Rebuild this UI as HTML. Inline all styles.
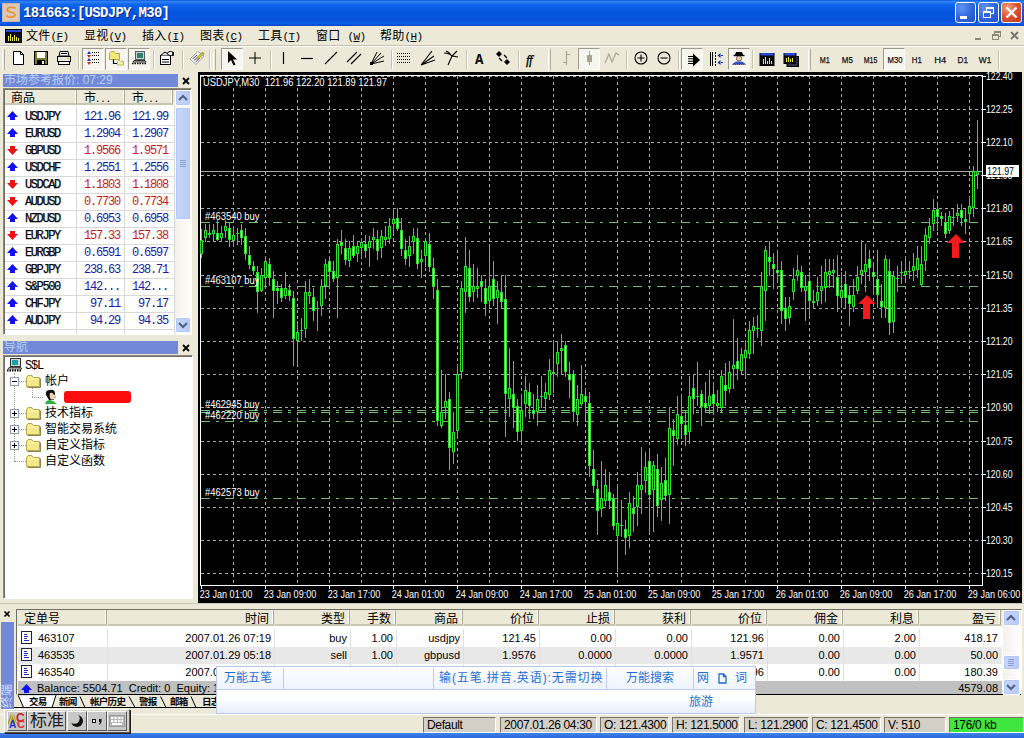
<!DOCTYPE html><html><head><meta charset="utf-8"><title>181663:[USDJPY,M30]</title><style>
*{box-sizing:border-box;margin:0;padding:0}
html,body{width:1024px;height:738px;overflow:hidden;background:#ece9d8}
body{position:relative;font-family:"Liberation Sans","Noto Sans CJK SC",sans-serif;font-size:11px;color:#000}
.a{position:absolute}
.t{position:absolute;white-space:nowrap;line-height:1}
.cj{font-family:"Liberation Sans","Noto Sans CJK SC",sans-serif}
.mono{font-family:"Liberation Mono","Noto Sans CJK SC",monospace}
#title{left:0;top:0;width:1024px;height:26px;background:linear-gradient(#0a59e0 0,#2f83f3 6%,#0f64ec 18%,#0556e0 45%,#0553dc 78%,#0a5ee8 90%,#0345c6 100%)}
#title .cap{left:23px;top:5px;font:bold 14px "Liberation Mono","Noto Sans CJK SC",monospace;color:#fff;letter-spacing:-0.7px;text-shadow:1px 1px 0 #0a2a80}
.tb{position:absolute;top:2px;width:21px;height:21px;border-radius:3px;border:1px solid #fff;background:radial-gradient(circle at 30% 25%,#5e96f5 0,#2e64dc 55%,#2050c8 100%)}
.tb.x{background:radial-gradient(circle at 30% 25%,#f0a080 0,#dc5030 50%,#c03a1a 100%)}
#menu{left:0;top:26px;width:1024px;height:20px;background:#ece9d8}
#menu .t{top:4px;font-size:12px;letter-spacing:0.2px}
.sepH{position:absolute;left:0;width:1024px;height:2px;border-top:1px solid #c5c2b2;border-bottom:1px solid #fff}
.vs{position:absolute;top:50px;width:2px;height:19px;border-left:1px solid #c5c2b2;border-right:1px solid #fff}
.grip{position:absolute;top:49px;width:3px;height:21px;border-left:1px solid #fff;border-right:1px solid #b0ad9c;background:#ece9d8}
.pr{position:absolute;top:48px;width:22px;height:22px;border:1px solid;border-color:#9d9a8b #fff #fff #9d9a8b;background:#f6f5ee}
.ic{position:absolute;top:51px;width:16px;height:16px}
.ph{position:absolute;left:3px;width:175px;height:13px;background:#7189d8;color:#b9d0f3;font-size:12px;overflow:hidden}
.px{position:absolute;font:bold 11px "Liberation Sans",sans-serif;}
</style></head><body><div id="title" class="a"><div class="a" style="left:2px;top:3px;width:18px;height:19px;background:#dcc8b8;border:1px solid #c8b4a4"><svg width="16" height="17" viewBox="0 0 16 17"><path d="M12.5 4.5 C10 2.5 4 3 4.2 6 C4.4 8.6 12 7.6 12 10.6 C12 13.6 5.5 13.8 3.2 11.6" fill="none" stroke="#e8943a" stroke-width="1.8"/></svg></div><div class="t cap">181663:[USDJPY,M30]</div><div class="tb" style="left:955px"><div class="a" style="left:4px;top:13px;width:7px;height:3px;background:#fff"></div></div><div class="tb" style="left:978px"><div class="a" style="left:7px;top:4px;width:8px;height:7px;border:1px solid #fff;border-top-width:2px"></div><div class="a" style="left:4px;top:8px;width:8px;height:7px;border:1px solid #fff;border-top-width:2px;background:#2e64dc"></div></div><div class="tb x" style="left:1001px"><svg class="a" style="left:0;top:0" width="19" height="19"><path d="M4.500 4.500 L14.500 14.500 M14.500 4.500 L4.500 14.500" stroke="#fff" stroke-width="2.300"/></svg></div></div><div id="menu" class="a"><svg class="a" style="left:5px;top:3px" width="17" height="14"><rect x=".5" y=".5" width="16" height="13" fill="#0a0a20" stroke="#000"/><rect x="1" y="1" width="15" height="2" fill="#2848d8"/><path d="M3.500 11.500V7M5.500 11.500V5M7.500 11.500V8M9.500 11.500V6M11.500 11.500V8M13.500 11.500V9" stroke="#f0e840" shape-rendering="crispEdges"/></svg><div class="t" style="left:26px">文件<span class="mono" style="font-size:11px;letter-spacing:-0.6px;margin-left:0px">(<u>F</u>)</span></div><div class="t" style="left:84px">显视<span class="mono" style="font-size:11px;letter-spacing:-0.6px;margin-left:0px">(<u>V</u>)</span></div><div class="t" style="left:142px">插入<span class="mono" style="font-size:11px;letter-spacing:-0.6px;margin-left:0px">(<u>I</u>)</span></div><div class="t" style="left:200px">图表<span class="mono" style="font-size:11px;letter-spacing:-0.6px;margin-left:0px">(<u>C</u>)</span></div><div class="t" style="left:258px">工具<span class="mono" style="font-size:11px;letter-spacing:-0.6px;margin-left:0px">(<u>T</u>)</span></div><div class="t" style="left:316px">窗口<span class="mono" style="font-size:11px;letter-spacing:-0.6px;margin-left:7px">(<u>W</u>)</span></div><div class="t" style="left:380px">帮助<span class="mono" style="font-size:11px;letter-spacing:-0.6px;margin-left:0px">(<u>H</u>)</span></div><div class="a" style="left:972px;top:2px;width:14px;height:15px"><div class="a" style="left:3px;top:10px;width:6px;height:2px;background:#8a8878"></div></div><div class="a" style="left:989px;top:2px;width:15px;height:15px"><div class="a" style="left:5px;top:3px;width:7px;height:6px;border:1px solid #8a8878;border-top-width:2px"></div><div class="a" style="left:3px;top:6px;width:7px;height:6px;border:1px solid #8a8878;border-top-width:2px;background:#ece9d8"></div></div><div class="a" style="left:1007px;top:2px;width:15px;height:15px"><svg width="15" height="15"><path d="M4 4 L11 11 M11 4 L4 11" stroke="#77756a" stroke-width="2"/></svg></div></div><div class="sepH" style="top:45px"></div><div class="grip" style="left:2px"></div><div class="pr" style="left:82px;width:22px"></div><div class="pr" style="left:105px;width:22px"></div><div class="pr" style="left:128px;width:22px"></div><div class="pr" style="left:221px;width:22px"></div><div class="pr" style="left:681px;width:22px"></div><div class="pr" style="left:728px;width:22px"></div><div class="pr" style="left:883px;width:22px"></div><div class="pr" style="left:578px;width:22px"></div><div class="vs" style="left:78px"></div><div class="vs" style="left:153px"></div><div class="vs" style="left:182px"></div><div class="vs" style="left:209px"></div><div class="vs" style="left:270px"></div><div class="vs" style="left:391px"></div><div class="vs" style="left:466px"></div><div class="vs" style="left:518px"></div><div class="vs" style="left:626px"></div><div class="vs" style="left:678px"></div><div class="vs" style="left:752px"></div><div class="grip" style="left:213px"></div><div class="grip" style="left:548px"></div><div class="grip" style="left:808px"></div><div class="vs" style="left:998px"></div><svg class="ic" style="left:10px;top:50px" width="16" height="16" viewBox="0 0 16 16"><path d="M3.5 1.5H10.5L13.5 4.5V14.5H3.5Z" fill="#fff" stroke="#000"/><path d="M10.5 1.5V4.5H13.5" fill="none" stroke="#000"/></svg><svg class="ic" style="left:33px;top:50px" width="16" height="16" viewBox="0 0 16 16"><rect x="1.5" y="1.5" width="13" height="13" fill="#7a7a30" stroke="#000"/><rect x="4" y="2" width="8" height="6" fill="#fff"/><rect x="4" y="10" width="8" height="5" fill="#000"/><rect x="9" y="11" width="2" height="3" fill="#fff"/></svg><svg class="ic" style="left:56px;top:50px" width="16" height="16" viewBox="0 0 16 16"><path d="M4 1.5H12L13 6H3Z" fill="#fff" stroke="#000"/><rect x="1.5" y="6.5" width="13" height="5" fill="#e8e8d8" stroke="#000"/><rect x="2.5" y="11.5" width="11" height="3" fill="#fff" stroke="#000"/><path d="M5 3.5H11" stroke="#000"/><rect x="11" y="8" width="2" height="1" fill="#cc0"/></svg><svg class="ic" style="left:85px;top:50px" width="16" height="16" viewBox="0 0 16 16"><path d="M2 4 L4 1 L6 4 Z" fill="#2030d0"/><path d="M7 2.5 H15" stroke="#000" stroke-dasharray="1 1"/><path d="M2 5 L6 5 L4 8 Z" fill="#c03020"/><path d="M7 5.5 H15" stroke="#000" stroke-dasharray="1 1"/><path d="M2 11 L4 8 L6 11 Z" fill="#2030d0"/><path d="M7 9.5 H15" stroke="#000" stroke-dasharray="1 1"/><path d="M2 12 L6 12 L4 15 Z" fill="#c03020"/><path d="M7 12.5 H15" stroke="#000" stroke-dasharray="1 1"/></svg><svg class="ic" style="left:108px;top:50px" width="16" height="16" viewBox="0 0 16 16"><path d="M1.5 3.5L3 1.5H6L7.5 3.5H11.5V9.5H1.5Z" fill="#f0e878" stroke="#b8a840"/><path d="M5.5 9.5V13.5H9" fill="none" stroke="#000" stroke-width="1.2"/><path d="M9.5 11.5L10.5 10.5H12L13 11.5H15.5V15H9.5Z" fill="#f5f0b0" stroke="#b8a840" stroke-width=".8"/></svg><svg class="ic" style="left:131px;top:50px" width="16" height="16" viewBox="0 0 16 16"><rect x="4.5" y="1.5" width="9" height="8" fill="#c8d8d0" stroke="#506060"/><rect x="6" y="3" width="6" height="5" fill="#308070"/><path d="M3 10.5H14L15 12H2Z" fill="#d8d8d0" stroke="#000" stroke-width=".8"/><path d="M1 13.5H15" stroke="#000" stroke-width="1.6" stroke-dasharray="1.5 1"/></svg><svg class="ic" style="left:159px;top:50px" width="16" height="16" viewBox="0 0 16 16"><rect x="1.5" y="5.5" width="10" height="9" fill="#fff" stroke="#000"/><path d="M1.5 5.5L6 2L11 5.5" fill="#ddd" stroke="#000"/><path d="M3 9.5H10M3 12H10" stroke="#000" stroke-width="1.2"/><ellipse cx="11.5" cy="3.5" rx="3" ry="2" fill="#fff" stroke="#000"/><path d="M14 2V6" stroke="#000" stroke-width="1.5"/></svg><svg class="ic" style="left:189px;top:50px" width="16" height="16" viewBox="0 0 16 16"><path d="M1 9L9 1.5L15 6L7 14.5Z" fill="#fff" stroke="#888" stroke-width=".8"/><path d="M3.5 9L8 5M5 10.5L8 8M6.5 12L11 8" stroke="#446" stroke-width="1"/><path d="M7 8.5L13 2.5L15 3.5L9 9.5Z" fill="#d8d020" stroke="#885"/></svg><svg class="ic" style="left:224px;top:50px" width="16" height="16" viewBox="0 0 16 16"><path d="M4 1V13L7 10L9.5 15.5L11.5 14.5L9 9.5H13Z" fill="#000"/></svg><svg class="ic" style="left:247px;top:50px" width="16" height="16" viewBox="0 0 16 16"><path d="M8 2V14M2 8H14" stroke="#000" stroke-width="1"/></svg><svg class="ic" style="left:275px;top:50px" width="16" height="16" viewBox="0 0 16 16"><path d="M8.5 2V14" stroke="#000" stroke-width="1.2"/></svg><svg class="ic" style="left:299px;top:50px" width="16" height="16" viewBox="0 0 16 16"><path d="M2 8.5H14" stroke="#000" stroke-width="1.2"/></svg><svg class="ic" style="left:323px;top:50px" width="16" height="16" viewBox="0 0 16 16"><path d="M2 14L14 2" stroke="#000" stroke-width="1.1"/></svg><svg class="ic" style="left:346px;top:50px" width="16" height="16" viewBox="0 0 16 16"><path d="M1 12L11 2M5 14L15 4" stroke="#000" stroke-width="1.1"/></svg><svg class="ic" style="left:369px;top:50px" width="16" height="16" viewBox="0 0 16 16"><path d="M2 14L8 2M2 14L12 3M2 14L15 6M2 14L15 11" stroke="#000" stroke-width="1"/><rect x="1" y="12" width="3" height="3" fill="#000"/></svg><svg class="ic" style="left:396px;top:50px" width="16" height="16" viewBox="0 0 16 16"><path d="M1 3.5H15" stroke="#000" stroke-dasharray="1 1"/><path d="M1 6.5H15" stroke="#000" stroke-dasharray="1 1"/><path d="M1 9.5H15" stroke="#000" stroke-dasharray="1 1"/><path d="M1 12.5H15" stroke="#000" stroke-dasharray="1 1"/></svg><svg class="ic" style="left:420px;top:50px" width="16" height="16" viewBox="0 0 16 16"><path d="M1 15L12 1M1 15L14 6M1 15L15 10" stroke="#000" stroke-width="1.1"/></svg><svg class="ic" style="left:443px;top:50px" width="16" height="16" viewBox="0 0 16 16"><path d="M5 15L9 6L14 1M9 6L15 7M1 3Q6 3 9 6M3 1Q6 2 8 5" stroke="#000" stroke-width="1.1" fill="none"/></svg><div class="t" style="left:475px;top:52px;font:bold 14px 'Liberation Mono',monospace">A</div><svg class="ic" style="left:495px;top:50px" width="16" height="16" viewBox="0 0 16 16"><path d="M4 1L7 4L4 7L1 4Z" fill="#000"/><path d="M12 9L15 12L12 15L9 12Z" fill="#000"/><path d="M4 8L7 11M9 5L12 8" stroke="#000" stroke-width="1.4"/></svg><div class="t" style="left:526px;top:52px;font:italic 13px 'Liberation Serif',serif;letter-spacing:-0.5px;-webkit-text-stroke:0.3px #000">ff</div><svg class="ic" style="left:558px;top:50px" width="16" height="16" viewBox="0 0 16 16"><path d="M8.5 1V15M5 12.5H8.5M8.5 4.5H12" stroke="#a8a595" stroke-width="1.2"/></svg><svg class="ic" style="left:581px;top:50px" width="16" height="16" viewBox="0 0 16 16"><path d="M8.5 1V15" stroke="#a8a595"/><rect x="6" y="5" width="5" height="7" fill="#a8a595"/></svg><svg class="ic" style="left:604px;top:50px" width="16" height="16" viewBox="0 0 16 16"><path d="M1 13L5 4L8 12L12 3L15 5" stroke="#a8a595" stroke-width="1.2" fill="none"/></svg><svg class="ic" style="left:633px;top:50px" width="16" height="16" viewBox="0 0 16 16"><circle cx="8" cy="8" r="6" fill="none" stroke="#000" stroke-width="1.1"/><path d="M4.5 8H11.5M8 4.5V11.5" stroke="#000" stroke-width="1.1"/></svg><svg class="ic" style="left:656px;top:50px" width="16" height="16" viewBox="0 0 16 16"><circle cx="8" cy="8" r="6" fill="none" stroke="#000" stroke-width="1.1"/><path d="M4.5 8H11.5" stroke="#000" stroke-width="1.1"/></svg><svg class="ic" style="left:685px;top:52px" width="16" height="16" viewBox="0 0 16 16"><path d="M8 1.5L15 8L8 14.5Z" fill="#000"/><path d="M3 4.5H8M3 6.8H8M3 9.2H8M3 11.5H8" stroke="#000" stroke-width="1.1"/></svg><svg class="ic" style="left:708px;top:51px" width="16" height="16" viewBox="0 0 16 16"><path d="M2.500 1V15M4.500 1V15" stroke="#000"/><path d="M7.500 1V15" stroke="#000" stroke-dasharray="2 1"/><path d="M9.500 4.500L12.500 2V7Z M15 4H12V5H15Z" fill="#1030c0"/><path d="M9.500 11.500L12.500 9V14Z M15 11H12V12H15Z" fill="#1030c0"/></svg><svg class="ic" style="left:731px;top:50px" width="16" height="16" viewBox="0 0 16 16"><path d="M4 5H12L11 2H5Z" fill="#000"/><path d="M2.5 5.5H13.5" stroke="#000" stroke-width="1.4"/><circle cx="8" cy="8.5" r="2.6" fill="#f0c8a0" stroke="#333" stroke-width=".7"/><path d="M1 15Q3 11 8 11.5Q13 11 15 15Z" fill="#3050c0"/><path d="M1 14.5H15" stroke="#88a" stroke-dasharray="1 1"/></svg><svg class="ic" style="left:759px;top:51px" width="16" height="16" viewBox="0 0 16 16"><rect x="1" y="2.500" width="14" height="12" fill="#0a0a0a" stroke="#000"/><rect x="1.500" y="2" width="13" height="2.500" fill="#2848d8"/><path d="M4.500 12.500V8M6.500 12.500V6M8.500 12.500V9.500M10.500 12.500V7M12.500 12.500V9.500" stroke="#f0e840" stroke-width="1" shape-rendering="crispEdges"/></svg><svg class="ic" style="left:783px;top:51px" width="16" height="16" viewBox="0 0 16 16"><rect x="4" y="5.500" width="11.500" height="10" fill="#0a0a0a" stroke="#000"/><rect x="1" y="2.500" width="12" height="10" fill="#0a0a0a" stroke="#000"/><rect x="1.500" y="2" width="11" height="2.500" fill="#2848d8"/><path d="M3.500 10.500V7M5.500 10.500V6M7.500 10.500V8M9.500 10.500V6.500" stroke="#f0e840" stroke-width="1" shape-rendering="crispEdges"/><path d="M14 6V14H5" stroke="#556" fill="none"/></svg><svg class="a" style="left:810px;top:48px" width="190" height="22" font-family="Liberation Sans, sans-serif" font-size="9.5" stroke="#111" stroke-width="0.25"><text x="9.8" y="14.5" textLength="10.0" lengthAdjust="spacingAndGlyphs" fill="#111">M1</text><text x="31.8" y="14.5" textLength="11.0" lengthAdjust="spacingAndGlyphs" fill="#111">M5</text><text x="53.8" y="14.5" textLength="13.5" lengthAdjust="spacingAndGlyphs" fill="#111">M15</text><text x="77.5" y="15.0" textLength="15.0" lengthAdjust="spacingAndGlyphs" fill="#111">M30</text><text x="101.8" y="14.5" textLength="10.0" lengthAdjust="spacingAndGlyphs" fill="#111">H1</text><text x="124.2" y="14.5" textLength="12.0" lengthAdjust="spacingAndGlyphs" fill="#111">H4</text><text x="147.5" y="14.5" textLength="10.5" lengthAdjust="spacingAndGlyphs" fill="#111">D1</text><text x="168.8" y="14.5" textLength="12.5" lengthAdjust="spacingAndGlyphs" fill="#111">W1</text></svg><div class="ph" style="top:74px"><div class="t" style="left:1px;top:0px;font-size:12px;letter-spacing:0px">市场参考报价: 07:29</div></div><svg class="a" style="left:181px;top:76px" width="10" height="10"><path d="M2 2L8 8M8 2L2 8" stroke="#000" stroke-width="1.8"/></svg><div class="a" style="left:3px;top:88px;width:189px;height:247px;border:1px solid;border-color:#8a887a #fff #fff #8a887a;background:#fff"></div><div class="a" style="left:4px;top:89px;width:1px;height:245px;background:#716f64"></div><div class="a" style="left:4px;top:89px;width:187px;height:1px;background:#716f64"></div><div class="a" style="left:5px;top:90px;width:72px;height:15px;background:#ece9d8;border-right:1px solid #aca899;border-bottom:2px solid #c9c6b6;box-shadow:inset -1px 0 0 #fff"></div><div class="t" style="left:11px;top:92px;font-size:12px">商品</div><div class="a" style="left:77px;top:90px;width:48px;height:15px;background:#ece9d8;border-right:1px solid #aca899;border-bottom:2px solid #c9c6b6;box-shadow:inset -1px 0 0 #fff"></div><div class="t" style="left:84px;top:92px;font-size:12px">市<span style="letter-spacing:2px">...</span></div><div class="a" style="left:125px;top:90px;width:48px;height:15px;background:#ece9d8;border-right:1px solid #aca899;border-bottom:2px solid #c9c6b6;box-shadow:inset -1px 0 0 #fff"></div><div class="t" style="left:132px;top:92px;font-size:12px">市<span style="letter-spacing:2px">...</span></div><div class="a" style="left:173px;top:90px;width:3px;height:15px;background:#ece9d8"></div><div class="a" style="left:5px;top:125px;width:170px;height:1px;background:#d8d8d8"></div><svg class="a" style="left:7px;top:111px" width="12" height="10"><path d="M5.500 0L11 6H8V9H3V6H0Z" fill="#1010f0"/></svg><div class="t mono" style="left:25px;top:111px;font-size:12px;letter-spacing:-1.4px;color:#000;-webkit-text-stroke:0.25px #000">USDJPY</div><div class="t mono" style="left:77px;top:111px;width:43px;text-align:right;font-size:12px;letter-spacing:-1.2px;color:#1a1aa0">121.96</div><div class="t mono" style="left:125px;top:111px;width:43px;text-align:right;font-size:12px;letter-spacing:-1.2px;color:#1a1aa0">121.99</div><div class="a" style="left:5px;top:142px;width:170px;height:1px;background:#d8d8d8"></div><svg class="a" style="left:7px;top:128px" width="12" height="10"><path d="M5.500 0L11 6H8V9H3V6H0Z" fill="#1010f0"/></svg><div class="t mono" style="left:25px;top:128px;font-size:12px;letter-spacing:-1.4px;color:#000;-webkit-text-stroke:0.25px #000">EURUSD</div><div class="t mono" style="left:77px;top:128px;width:43px;text-align:right;font-size:12px;letter-spacing:-1.2px;color:#1a1aa0">1.2904</div><div class="t mono" style="left:125px;top:128px;width:43px;text-align:right;font-size:12px;letter-spacing:-1.2px;color:#1a1aa0">1.2907</div><div class="a" style="left:5px;top:159px;width:170px;height:1px;background:#d8d8d8"></div><svg class="a" style="left:7px;top:146px" width="12" height="10"><path d="M5.500 9L11 3H8V0H3V3H0Z" fill="#f01010"/></svg><div class="t mono" style="left:25px;top:145px;font-size:12px;letter-spacing:-1.4px;color:#000;-webkit-text-stroke:0.25px #000">GBPUSD</div><div class="t mono" style="left:77px;top:145px;width:43px;text-align:right;font-size:12px;letter-spacing:-1.2px;color:#c81818">1.9566</div><div class="t mono" style="left:125px;top:145px;width:43px;text-align:right;font-size:12px;letter-spacing:-1.2px;color:#c81818">1.9571</div><div class="a" style="left:5px;top:176px;width:170px;height:1px;background:#d8d8d8"></div><svg class="a" style="left:7px;top:162px" width="12" height="10"><path d="M5.500 0L11 6H8V9H3V6H0Z" fill="#1010f0"/></svg><div class="t mono" style="left:25px;top:162px;font-size:12px;letter-spacing:-1.4px;color:#000;-webkit-text-stroke:0.25px #000">USDCHF</div><div class="t mono" style="left:77px;top:162px;width:43px;text-align:right;font-size:12px;letter-spacing:-1.2px;color:#1a1aa0">1.2551</div><div class="t mono" style="left:125px;top:162px;width:43px;text-align:right;font-size:12px;letter-spacing:-1.2px;color:#1a1aa0">1.2556</div><div class="a" style="left:5px;top:193px;width:170px;height:1px;background:#d8d8d8"></div><svg class="a" style="left:7px;top:180px" width="12" height="10"><path d="M5.500 9L11 3H8V0H3V3H0Z" fill="#f01010"/></svg><div class="t mono" style="left:25px;top:179px;font-size:12px;letter-spacing:-1.4px;color:#000;-webkit-text-stroke:0.25px #000">USDCAD</div><div class="t mono" style="left:77px;top:179px;width:43px;text-align:right;font-size:12px;letter-spacing:-1.2px;color:#c81818">1.1803</div><div class="t mono" style="left:125px;top:179px;width:43px;text-align:right;font-size:12px;letter-spacing:-1.2px;color:#c81818">1.1808</div><div class="a" style="left:5px;top:210px;width:170px;height:1px;background:#d8d8d8"></div><svg class="a" style="left:7px;top:197px" width="12" height="10"><path d="M5.500 9L11 3H8V0H3V3H0Z" fill="#f01010"/></svg><div class="t mono" style="left:25px;top:196px;font-size:12px;letter-spacing:-1.4px;color:#000;-webkit-text-stroke:0.25px #000">AUDUSD</div><div class="t mono" style="left:77px;top:196px;width:43px;text-align:right;font-size:12px;letter-spacing:-1.2px;color:#c81818">0.7730</div><div class="t mono" style="left:125px;top:196px;width:43px;text-align:right;font-size:12px;letter-spacing:-1.2px;color:#c81818">0.7734</div><div class="a" style="left:5px;top:227px;width:170px;height:1px;background:#d8d8d8"></div><svg class="a" style="left:7px;top:213px" width="12" height="10"><path d="M5.500 0L11 6H8V9H3V6H0Z" fill="#1010f0"/></svg><div class="t mono" style="left:25px;top:213px;font-size:12px;letter-spacing:-1.4px;color:#000;-webkit-text-stroke:0.25px #000">NZDUSD</div><div class="t mono" style="left:77px;top:213px;width:43px;text-align:right;font-size:12px;letter-spacing:-1.2px;color:#1a1aa0">0.6953</div><div class="t mono" style="left:125px;top:213px;width:43px;text-align:right;font-size:12px;letter-spacing:-1.2px;color:#1a1aa0">0.6958</div><div class="a" style="left:5px;top:244px;width:170px;height:1px;background:#d8d8d8"></div><svg class="a" style="left:7px;top:231px" width="12" height="10"><path d="M5.500 9L11 3H8V0H3V3H0Z" fill="#f01010"/></svg><div class="t mono" style="left:25px;top:230px;font-size:12px;letter-spacing:-1.4px;color:#000;-webkit-text-stroke:0.25px #000">EURJPY</div><div class="t mono" style="left:77px;top:230px;width:43px;text-align:right;font-size:12px;letter-spacing:-1.2px;color:#c81818">157.33</div><div class="t mono" style="left:125px;top:230px;width:43px;text-align:right;font-size:12px;letter-spacing:-1.2px;color:#c81818">157.38</div><div class="a" style="left:5px;top:261px;width:170px;height:1px;background:#d8d8d8"></div><svg class="a" style="left:7px;top:247px" width="12" height="10"><path d="M5.500 0L11 6H8V9H3V6H0Z" fill="#1010f0"/></svg><div class="t mono" style="left:25px;top:247px;font-size:12px;letter-spacing:-1.4px;color:#000;-webkit-text-stroke:0.25px #000">EURGBP</div><div class="t mono" style="left:77px;top:247px;width:43px;text-align:right;font-size:12px;letter-spacing:-1.2px;color:#1a1aa0">0.6591</div><div class="t mono" style="left:125px;top:247px;width:43px;text-align:right;font-size:12px;letter-spacing:-1.2px;color:#1a1aa0">0.6597</div><div class="a" style="left:5px;top:278px;width:170px;height:1px;background:#d8d8d8"></div><svg class="a" style="left:7px;top:264px" width="12" height="10"><path d="M5.500 0L11 6H8V9H3V6H0Z" fill="#1010f0"/></svg><div class="t mono" style="left:25px;top:264px;font-size:12px;letter-spacing:-1.4px;color:#000;-webkit-text-stroke:0.25px #000">GBPJPY</div><div class="t mono" style="left:77px;top:264px;width:43px;text-align:right;font-size:12px;letter-spacing:-1.2px;color:#1a1aa0">238.63</div><div class="t mono" style="left:125px;top:264px;width:43px;text-align:right;font-size:12px;letter-spacing:-1.2px;color:#1a1aa0">238.71</div><div class="a" style="left:5px;top:295px;width:170px;height:1px;background:#d8d8d8"></div><svg class="a" style="left:7px;top:281px" width="12" height="10"><path d="M5.500 0L11 6H8V9H3V6H0Z" fill="#1010f0"/></svg><div class="t mono" style="left:25px;top:281px;font-size:12px;letter-spacing:-1.4px;color:#000;-webkit-text-stroke:0.25px #000">S&amp;P500</div><div class="t mono" style="left:77px;top:281px;width:43px;text-align:right;font-size:12px;letter-spacing:-1.2px;color:#1a1aa0">142...</div><div class="t mono" style="left:125px;top:281px;width:43px;text-align:right;font-size:12px;letter-spacing:-1.2px;color:#1a1aa0">142...</div><div class="a" style="left:5px;top:312px;width:170px;height:1px;background:#d8d8d8"></div><svg class="a" style="left:7px;top:298px" width="12" height="10"><path d="M5.500 0L11 6H8V9H3V6H0Z" fill="#1010f0"/></svg><div class="t mono" style="left:25px;top:298px;font-size:12px;letter-spacing:-1.4px;color:#000;-webkit-text-stroke:0.25px #000">CHFJPY</div><div class="t mono" style="left:77px;top:298px;width:43px;text-align:right;font-size:12px;letter-spacing:-1.2px;color:#1a1aa0">97.11</div><div class="t mono" style="left:125px;top:298px;width:43px;text-align:right;font-size:12px;letter-spacing:-1.2px;color:#1a1aa0">97.17</div><div class="a" style="left:5px;top:329px;width:170px;height:1px;background:#d8d8d8"></div><svg class="a" style="left:7px;top:315px" width="12" height="10"><path d="M5.500 0L11 6H8V9H3V6H0Z" fill="#1010f0"/></svg><div class="t mono" style="left:25px;top:315px;font-size:12px;letter-spacing:-1.4px;color:#000;-webkit-text-stroke:0.25px #000">AUDJPY</div><div class="t mono" style="left:77px;top:315px;width:43px;text-align:right;font-size:12px;letter-spacing:-1.2px;color:#1a1aa0">94.29</div><div class="t mono" style="left:125px;top:315px;width:43px;text-align:right;font-size:12px;letter-spacing:-1.2px;color:#1a1aa0">94.35</div><div class="a" style="left:76px;top:106px;width:1px;height:228px;background:#d8d8d8"></div><div class="a" style="left:124px;top:106px;width:1px;height:228px;background:#d8d8d8"></div><div class="a" style="left:174px;top:106px;width:1px;height:228px;background:#d8d8d8"></div><div class="a" style="left:175px;top:90px;width:16px;height:243px;background:linear-gradient(90deg,#f3f1ec,#fefefb)"></div><div class="a" style="left:175px;top:90px;width:16px;height:16px;border:1px solid #fff;border-radius:2px;background:linear-gradient(90deg,#c8d6fb,#b9cbf7);box-shadow:inset 0 0 0 1px #b4c8f6"><svg width="16" height="16" style="position:absolute;left:-1px;top:-1px"><path d="M4 10 L8 6 L12 10" fill="none" stroke="#4d6185" stroke-width="2"/></svg></div><div class="a" style="left:175px;top:317px;width:16px;height:16px;border:1px solid #fff;border-radius:2px;background:linear-gradient(90deg,#c8d6fb,#b9cbf7);box-shadow:inset 0 0 0 1px #b4c8f6"><svg width="16" height="16" style="position:absolute;left:-1px;top:-1px"><path d="M4 6 L8 10 L12 6" fill="none" stroke="#4d6185" stroke-width="2"/></svg></div><div class="a" style="left:175px;top:107px;width:16px;height:113px;border:1px solid #fff;border-radius:2px;background:linear-gradient(90deg,#c8d6fb,#b9cbf7);box-shadow:inset 0 0 0 1px #b4c8f6"></div><div class="a" style="left:180px;top:160px;width:6px;height:1px;background:#8ca0d8"></div><div class="a" style="left:180px;top:162px;width:6px;height:1px;background:#8ca0d8"></div><div class="a" style="left:180px;top:164px;width:6px;height:1px;background:#8ca0d8"></div><div class="a" style="left:180px;top:166px;width:6px;height:1px;background:#8ca0d8"></div><div class="ph" style="top:341px"><div class="t" style="left:1px;top:0px;font-size:12px">导航</div></div><svg class="a" style="left:181px;top:343px" width="10" height="10"><path d="M2 2L8 8M8 2L2 8" stroke="#000" stroke-width="1.8"/></svg><div class="a" style="left:3px;top:355px;width:190px;height:244px;border:1px solid;border-color:#8a887a #fff #fff #8a887a;background:#fff"></div><div class="a" style="left:4px;top:356px;width:1px;height:242px;background:#716f64"></div><div class="a" style="left:4px;top:356px;width:188px;height:1px;background:#716f64"></div><div class="a" style="left:14px;top:373px;width:0;height:88px;border-left:1px dotted #999"></div><div class="a" style="left:14px;top:381px;width:12px;height:0;border-top:1px dotted #999"></div><div class="a" style="left:14px;top:413px;width:12px;height:0;border-top:1px dotted #999"></div><div class="a" style="left:14px;top:429px;width:12px;height:0;border-top:1px dotted #999"></div><div class="a" style="left:14px;top:445px;width:12px;height:0;border-top:1px dotted #999"></div><div class="a" style="left:14px;top:461px;width:12px;height:0;border-top:1px dotted #999"></div><div class="a" style="left:32px;top:388px;width:0;height:9px;border-left:1px dotted #999"></div><div class="a" style="left:32px;top:397px;width:11px;height:0;border-top:1px dotted #999"></div><svg class="a" style="left:6px;top:357px" width="17" height="16"><rect x="4.500" y="1.500" width="10" height="8" fill="#d0d8d8" stroke="#333"/><rect x="6" y="3" width="6" height="5" fill="#20a0a0"/><path d="M3 10.500H15L16 12H2Z" fill="#e8e8e0" stroke="#222" stroke-width=".8"/><path d="M1 13.500H16" stroke="#000" stroke-width="1.800" stroke-dasharray="1.500 1"/></svg><div class="t mono" style="left:25px;top:360px;font-size:12px;letter-spacing:-1.2px">S$L</div><div class="a" style="left:10px;top:377px;width:9px;height:9px;border:1px solid #8a9aaa;background:#fff"></div><div class="a" style="left:12px;top:381px;width:5px;height:1px;background:#000"></div><svg class="a" style="left:25px;top:374px" width="16" height="14"><path d="M1.500 3.500L3 1.500H7L8.500 3.500H14.500V12.500H1.500Z" fill="#f3e98a" stroke="#b9a848"/><path d="M2.500 5H13.500" stroke="#fbf6c0"/><path d="M15.500 4.500V13.500H2.500" stroke="#8a8050" fill="none"/></svg><div class="t" style="left:45px;top:375px;font-size:12px">帐户</div><div class="a" style="left:10px;top:409px;width:9px;height:9px;border:1px solid #8a9aaa;background:#fff"></div><div class="a" style="left:12px;top:413px;width:5px;height:1px;background:#000"></div><div class="a" style="left:14px;top:411px;width:1px;height:5px;background:#000"></div><svg class="a" style="left:25px;top:406px" width="16" height="14"><path d="M1.500 3.500L3 1.500H7L8.500 3.500H14.500V12.500H1.500Z" fill="#f3e98a" stroke="#b9a848"/><path d="M2.500 5H13.500" stroke="#fbf6c0"/><path d="M15.500 4.500V13.500H2.500" stroke="#8a8050" fill="none"/></svg><div class="t" style="left:45px;top:407px;font-size:12px">技术指标</div><div class="a" style="left:10px;top:425px;width:9px;height:9px;border:1px solid #8a9aaa;background:#fff"></div><div class="a" style="left:12px;top:429px;width:5px;height:1px;background:#000"></div><div class="a" style="left:14px;top:427px;width:1px;height:5px;background:#000"></div><svg class="a" style="left:25px;top:422px" width="16" height="14"><path d="M1.500 3.500L3 1.500H7L8.500 3.500H14.500V12.500H1.500Z" fill="#f3e98a" stroke="#b9a848"/><path d="M2.500 5H13.500" stroke="#fbf6c0"/><path d="M15.500 4.500V13.500H2.500" stroke="#8a8050" fill="none"/></svg><div class="t" style="left:45px;top:423px;font-size:12px">智能交易系统</div><div class="a" style="left:10px;top:441px;width:9px;height:9px;border:1px solid #8a9aaa;background:#fff"></div><div class="a" style="left:12px;top:445px;width:5px;height:1px;background:#000"></div><div class="a" style="left:14px;top:443px;width:1px;height:5px;background:#000"></div><svg class="a" style="left:25px;top:438px" width="16" height="14"><path d="M1.500 3.500L3 1.500H7L8.500 3.500H14.500V12.500H1.500Z" fill="#f3e98a" stroke="#b9a848"/><path d="M2.500 5H13.500" stroke="#fbf6c0"/><path d="M15.500 4.500V13.500H2.500" stroke="#8a8050" fill="none"/></svg><div class="t" style="left:45px;top:439px;font-size:12px">自定义指标</div><svg class="a" style="left:25px;top:454px" width="16" height="14"><path d="M1.500 3.500L3 1.500H7L8.500 3.500H14.500V12.500H1.500Z" fill="#f3e98a" stroke="#b9a848"/><path d="M2.500 5H13.500" stroke="#fbf6c0"/><path d="M15.500 4.500V13.500H2.500" stroke="#8a8050" fill="none"/></svg><div class="t" style="left:45px;top:455px;font-size:12px">自定义函数</div><svg class="a" style="left:44px;top:389px" width="14" height="15"><path d="M2 6Q1 1 6 1Q11 0 11 5L10 7L12 8L10 9V11H5Z" fill="#111"/><path d="M6 4Q9 3 10 6L11.500 8L10 9V10.500H7Q5 8 6 4Z" fill="#f0d0b0"/><path d="M1 15Q2 11 6 11L9 12L13 15Z" fill="#30b040"/></svg><div class="a" style="left:64px;top:391px;width:67px;height:12px;border-radius:3px;background:#fb0d0d"></div><svg class="a" style="left:198px;top:72px" width="824" height="531" viewBox="198 72 824 531" shape-rendering="crispEdges" font-family="Liberation Sans, sans-serif" font-size="10"><rect x="198" y="72" width="824" height="531" fill="#000"/><path d="M233.5 76V585" stroke="#a8acb0" stroke-dasharray="3 3"/><path d="M265.5 76V585" stroke="#a8acb0" stroke-dasharray="3 3"/><path d="M297.5 76V585" stroke="#a8acb0" stroke-dasharray="3 3"/><path d="M329.5 76V585" stroke="#a8acb0" stroke-dasharray="3 3"/><path d="M361.5 76V585" stroke="#a8acb0" stroke-dasharray="3 3"/><path d="M393.5 76V585" stroke="#a8acb0" stroke-dasharray="3 3"/><path d="M425.5 76V585" stroke="#a8acb0" stroke-dasharray="3 3"/><path d="M457.5 76V585" stroke="#a8acb0" stroke-dasharray="3 3"/><path d="M489.5 76V585" stroke="#a8acb0" stroke-dasharray="3 3"/><path d="M521.5 76V585" stroke="#a8acb0" stroke-dasharray="3 3"/><path d="M553.5 76V585" stroke="#a8acb0" stroke-dasharray="3 3"/><path d="M585.5 76V585" stroke="#a8acb0" stroke-dasharray="3 3"/><path d="M617.5 76V585" stroke="#a8acb0" stroke-dasharray="3 3"/><path d="M649.5 76V585" stroke="#a8acb0" stroke-dasharray="3 3"/><path d="M681.5 76V585" stroke="#a8acb0" stroke-dasharray="3 3"/><path d="M713.5 76V585" stroke="#a8acb0" stroke-dasharray="3 3"/><path d="M745.5 76V585" stroke="#a8acb0" stroke-dasharray="3 3"/><path d="M777.5 76V585" stroke="#a8acb0" stroke-dasharray="3 3"/><path d="M809.5 76V585" stroke="#a8acb0" stroke-dasharray="3 3"/><path d="M841.5 76V585" stroke="#a8acb0" stroke-dasharray="3 3"/><path d="M873.5 76V585" stroke="#a8acb0" stroke-dasharray="3 3"/><path d="M905.5 76V585" stroke="#a8acb0" stroke-dasharray="3 3"/><path d="M937.5 76V585" stroke="#a8acb0" stroke-dasharray="3 3"/><path d="M969.5 76V585" stroke="#a8acb0" stroke-dasharray="3 3"/><path d="M201 76.5H982" stroke="#a8acb0" stroke-dasharray="3 3"/><path d="M982 76.5H986" stroke="#fff"/><text x="986" y="80" fill="#fff" textLength="26.5" lengthAdjust="spacingAndGlyphs">122.40</text><path d="M201 109.5H982" stroke="#a8acb0" stroke-dasharray="3 3"/><path d="M982 109.5H986" stroke="#fff"/><text x="986" y="113" fill="#fff" textLength="26.5" lengthAdjust="spacingAndGlyphs">122.25</text><path d="M201 142.5H982" stroke="#a8acb0" stroke-dasharray="3 3"/><path d="M982 142.5H986" stroke="#fff"/><text x="986" y="146" fill="#fff" textLength="26.5" lengthAdjust="spacingAndGlyphs">122.10</text><path d="M201 175.5H982" stroke="#a8acb0" stroke-dasharray="3 3"/><path d="M982 175.5H986" stroke="#fff"/><text x="986" y="179" fill="#fff" textLength="26.5" lengthAdjust="spacingAndGlyphs">121.95</text><path d="M201 208.5H982" stroke="#a8acb0" stroke-dasharray="3 3"/><path d="M982 208.5H986" stroke="#fff"/><text x="986" y="212" fill="#fff" textLength="26.5" lengthAdjust="spacingAndGlyphs">121.80</text><path d="M201 241.5H982" stroke="#a8acb0" stroke-dasharray="3 3"/><path d="M982 241.5H986" stroke="#fff"/><text x="986" y="245" fill="#fff" textLength="26.5" lengthAdjust="spacingAndGlyphs">121.65</text><path d="M201 275.5H982" stroke="#a8acb0" stroke-dasharray="3 3"/><path d="M982 275.5H986" stroke="#fff"/><text x="986" y="279" fill="#fff" textLength="26.5" lengthAdjust="spacingAndGlyphs">121.50</text><path d="M201 308.5H982" stroke="#a8acb0" stroke-dasharray="3 3"/><path d="M982 308.5H986" stroke="#fff"/><text x="986" y="312" fill="#fff" textLength="26.5" lengthAdjust="spacingAndGlyphs">121.35</text><path d="M201 341.5H982" stroke="#a8acb0" stroke-dasharray="3 3"/><path d="M982 341.5H986" stroke="#fff"/><text x="986" y="345" fill="#fff" textLength="26.5" lengthAdjust="spacingAndGlyphs">121.20</text><path d="M201 374.5H982" stroke="#a8acb0" stroke-dasharray="3 3"/><path d="M982 374.5H986" stroke="#fff"/><text x="986" y="378" fill="#fff" textLength="26.5" lengthAdjust="spacingAndGlyphs">121.05</text><path d="M201 407.5H982" stroke="#a8acb0" stroke-dasharray="3 3"/><path d="M982 407.5H986" stroke="#fff"/><text x="986" y="411" fill="#fff" textLength="26.5" lengthAdjust="spacingAndGlyphs">120.90</text><path d="M201 441.5H982" stroke="#a8acb0" stroke-dasharray="3 3"/><path d="M982 441.5H986" stroke="#fff"/><text x="986" y="445" fill="#fff" textLength="26.5" lengthAdjust="spacingAndGlyphs">120.75</text><path d="M201 474.5H982" stroke="#a8acb0" stroke-dasharray="3 3"/><path d="M982 474.5H986" stroke="#fff"/><text x="986" y="478" fill="#fff" textLength="26.5" lengthAdjust="spacingAndGlyphs">120.60</text><path d="M201 507.5H982" stroke="#a8acb0" stroke-dasharray="3 3"/><path d="M982 507.5H986" stroke="#fff"/><text x="986" y="511" fill="#fff" textLength="26.5" lengthAdjust="spacingAndGlyphs">120.45</text><path d="M201 540.5H982" stroke="#a8acb0" stroke-dasharray="3 3"/><path d="M982 540.5H986" stroke="#fff"/><text x="986" y="544" fill="#fff" textLength="26.5" lengthAdjust="spacingAndGlyphs">120.30</text><path d="M201 573.5H982" stroke="#a8acb0" stroke-dasharray="3 3"/><path d="M982 573.5H986" stroke="#fff"/><text x="986" y="577" fill="#fff" textLength="26.5" lengthAdjust="spacingAndGlyphs">120.15</text><path d="M200.500 75V585.500H982.500V75" stroke="#fff" fill="none"/><path d="M200 75.500H983" stroke="#fff"/><path d="M201.5 585V589" stroke="#fff"/><text x="199.8" y="598" fill="#fff" textLength="52.5" lengthAdjust="spacingAndGlyphs">23 Jan 01:00</text><path d="M265.5 585V589" stroke="#fff"/><text x="263.8" y="598" fill="#fff" textLength="52.5" lengthAdjust="spacingAndGlyphs">23 Jan 09:00</text><path d="M329.5 585V589" stroke="#fff"/><text x="327.8" y="598" fill="#fff" textLength="52.5" lengthAdjust="spacingAndGlyphs">23 Jan 17:00</text><path d="M393.5 585V589" stroke="#fff"/><text x="391.8" y="598" fill="#fff" textLength="52.5" lengthAdjust="spacingAndGlyphs">24 Jan 01:00</text><path d="M457.5 585V589" stroke="#fff"/><text x="455.8" y="598" fill="#fff" textLength="52.5" lengthAdjust="spacingAndGlyphs">24 Jan 09:00</text><path d="M521.5 585V589" stroke="#fff"/><text x="519.8" y="598" fill="#fff" textLength="52.5" lengthAdjust="spacingAndGlyphs">24 Jan 17:00</text><path d="M585.5 585V589" stroke="#fff"/><text x="583.8" y="598" fill="#fff" textLength="52.5" lengthAdjust="spacingAndGlyphs">25 Jan 01:00</text><path d="M649.5 585V589" stroke="#fff"/><text x="647.8" y="598" fill="#fff" textLength="52.5" lengthAdjust="spacingAndGlyphs">25 Jan 09:00</text><path d="M713.5 585V589" stroke="#fff"/><text x="711.8" y="598" fill="#fff" textLength="52.5" lengthAdjust="spacingAndGlyphs">25 Jan 17:00</text><path d="M777.5 585V589" stroke="#fff"/><text x="775.8" y="598" fill="#fff" textLength="52.5" lengthAdjust="spacingAndGlyphs">26 Jan 01:00</text><path d="M841.5 585V589" stroke="#fff"/><text x="839.8" y="598" fill="#fff" textLength="52.5" lengthAdjust="spacingAndGlyphs">26 Jan 09:00</text><path d="M905.5 585V589" stroke="#fff"/><text x="903.8" y="598" fill="#fff" textLength="52.5" lengthAdjust="spacingAndGlyphs">26 Jan 17:00</text><path d="M969.5 585V589" stroke="#fff"/><text x="967.8" y="598" fill="#fff" textLength="52.5" lengthAdjust="spacingAndGlyphs">29 Jan 06:00</text><path d="M201 222.5H982" stroke="#70c070" stroke-dasharray="9 6 3 6"/><path d="M201 286.5H982" stroke="#70c070" stroke-dasharray="9 6 3 6"/><path d="M201 410.5H982" stroke="#70c070" stroke-dasharray="9 6 3 6"/><path d="M201 412.5H982" stroke="#70c070" stroke-dasharray="9 6 3 6"/><path d="M201 421.5H982" stroke="#70c070" stroke-dasharray="9 6 3 6"/><path d="M201 498.5H982" stroke="#70c070" stroke-dasharray="9 6 3 6"/><path d="M201 171.500H982" stroke="#a8a8a8"/><rect x="201" y="229" width="1" height="29" fill="#33dc33"/><rect x="200" y="240" width="3" height="14" fill="#33dc33"/><rect x="201" y="241" width="1" height="12" fill="#000"/><rect x="205" y="224" width="1" height="18" fill="#33dc33"/><rect x="204" y="230" width="3" height="8" fill="#33dc33"/><rect x="205" y="231" width="1" height="6" fill="#000"/><rect x="209" y="224" width="1" height="14" fill="#33dc33"/><rect x="208" y="233" width="3" height="2" fill="#33dc33"/><rect x="213" y="224" width="1" height="17" fill="#33dc33"/><rect x="212" y="230" width="3" height="4" fill="#33dc33"/><rect x="213" y="231" width="1" height="2" fill="#000"/><rect x="217" y="220" width="1" height="21" fill="#33dc33"/><rect x="216" y="233" width="3" height="7" fill="#33dc33"/><rect x="217" y="234" width="1" height="5" fill="#c8ffc8"/><rect x="221" y="226" width="1" height="15" fill="#33dc33"/><rect x="220" y="233" width="3" height="5" fill="#33dc33"/><rect x="221" y="234" width="1" height="3" fill="#000"/><rect x="225" y="220" width="1" height="18" fill="#33dc33"/><rect x="224" y="226" width="3" height="5" fill="#33dc33"/><rect x="225" y="227" width="1" height="3" fill="#000"/><rect x="229" y="223" width="1" height="24" fill="#33dc33"/><rect x="228" y="228" width="3" height="12" fill="#33dc33"/><rect x="229" y="229" width="1" height="10" fill="#c8ffc8"/><rect x="233" y="226" width="1" height="21" fill="#33dc33"/><rect x="232" y="235" width="3" height="6" fill="#33dc33"/><rect x="233" y="236" width="1" height="4" fill="#000"/><rect x="237" y="228" width="1" height="17" fill="#33dc33"/><rect x="236" y="233" width="3" height="1" fill="#33dc33"/><rect x="241" y="224" width="1" height="21" fill="#33dc33"/><rect x="240" y="230" width="3" height="8" fill="#33dc33"/><rect x="241" y="231" width="1" height="6" fill="#c8ffc8"/><rect x="245" y="228" width="1" height="32" fill="#33dc33"/><rect x="244" y="236" width="3" height="18" fill="#33dc33"/><rect x="245" y="237" width="1" height="16" fill="#c8ffc8"/><rect x="249" y="246" width="1" height="23" fill="#33dc33"/><rect x="248" y="255" width="3" height="10" fill="#33dc33"/><rect x="249" y="256" width="1" height="8" fill="#c8ffc8"/><rect x="253" y="261" width="1" height="14" fill="#33dc33"/><rect x="252" y="266" width="3" height="5" fill="#33dc33"/><rect x="253" y="267" width="1" height="3" fill="#c8ffc8"/><rect x="257" y="266" width="1" height="47" fill="#33dc33"/><rect x="256" y="272" width="3" height="20" fill="#33dc33"/><rect x="257" y="273" width="1" height="18" fill="#c8ffc8"/><rect x="261" y="268" width="1" height="24" fill="#33dc33"/><rect x="260" y="275" width="3" height="16" fill="#33dc33"/><rect x="261" y="276" width="1" height="14" fill="#000"/><rect x="265" y="256" width="1" height="33" fill="#33dc33"/><rect x="264" y="261" width="3" height="17" fill="#33dc33"/><rect x="265" y="262" width="1" height="15" fill="#000"/><rect x="269" y="258" width="1" height="28" fill="#33dc33"/><rect x="268" y="264" width="3" height="14" fill="#33dc33"/><rect x="269" y="265" width="1" height="12" fill="#c8ffc8"/><rect x="273" y="271" width="1" height="47" fill="#33dc33"/><rect x="272" y="279" width="3" height="12" fill="#33dc33"/><rect x="273" y="280" width="1" height="10" fill="#c8ffc8"/><rect x="277" y="281" width="1" height="23" fill="#33dc33"/><rect x="276" y="288" width="3" height="3" fill="#33dc33"/><rect x="277" y="289" width="1" height="1" fill="#c8ffc8"/><rect x="281" y="284" width="1" height="18" fill="#33dc33"/><rect x="280" y="288" width="3" height="10" fill="#33dc33"/><rect x="281" y="289" width="1" height="8" fill="#c8ffc8"/><rect x="285" y="272" width="1" height="27" fill="#33dc33"/><rect x="284" y="288" width="3" height="8" fill="#33dc33"/><rect x="285" y="289" width="1" height="6" fill="#000"/><rect x="289" y="284" width="1" height="17" fill="#33dc33"/><rect x="288" y="290" width="3" height="6" fill="#33dc33"/><rect x="289" y="291" width="1" height="4" fill="#c8ffc8"/><rect x="293" y="291" width="1" height="75" fill="#33dc33"/><rect x="292" y="298" width="3" height="41" fill="#33dc33"/><rect x="293" y="299" width="1" height="39" fill="#c8ffc8"/><rect x="297" y="321" width="1" height="45" fill="#33dc33"/><rect x="296" y="332" width="3" height="9" fill="#33dc33"/><rect x="297" y="333" width="1" height="7" fill="#000"/><rect x="301" y="318" width="1" height="23" fill="#33dc33"/><rect x="300" y="330" width="3" height="1" fill="#33dc33"/><rect x="305" y="281" width="1" height="57" fill="#33dc33"/><rect x="304" y="292" width="3" height="37" fill="#33dc33"/><rect x="305" y="293" width="1" height="35" fill="#000"/><rect x="309" y="279" width="1" height="25" fill="#33dc33"/><rect x="308" y="292" width="3" height="4" fill="#33dc33"/><rect x="309" y="293" width="1" height="2" fill="#000"/><rect x="313" y="288" width="1" height="33" fill="#33dc33"/><rect x="312" y="297" width="3" height="14" fill="#33dc33"/><rect x="313" y="298" width="1" height="12" fill="#c8ffc8"/><rect x="317" y="301" width="1" height="30" fill="#33dc33"/><rect x="316" y="308" width="3" height="1" fill="#33dc33"/><rect x="321" y="279" width="1" height="37" fill="#33dc33"/><rect x="320" y="286" width="3" height="20" fill="#33dc33"/><rect x="321" y="287" width="1" height="18" fill="#000"/><rect x="325" y="259" width="1" height="40" fill="#33dc33"/><rect x="324" y="264" width="3" height="22" fill="#33dc33"/><rect x="325" y="265" width="1" height="20" fill="#000"/><rect x="329" y="256" width="1" height="32" fill="#33dc33"/><rect x="328" y="261" width="3" height="11" fill="#33dc33"/><rect x="329" y="262" width="1" height="9" fill="#c8ffc8"/><rect x="333" y="261" width="1" height="21" fill="#33dc33"/><rect x="332" y="271" width="3" height="8" fill="#33dc33"/><rect x="333" y="272" width="1" height="6" fill="#c8ffc8"/><rect x="337" y="239" width="1" height="79" fill="#33dc33"/><rect x="336" y="244" width="3" height="34" fill="#33dc33"/><rect x="337" y="245" width="1" height="32" fill="#000"/><rect x="341" y="230" width="1" height="24" fill="#33dc33"/><rect x="340" y="242" width="3" height="4" fill="#33dc33"/><rect x="341" y="243" width="1" height="2" fill="#c8ffc8"/><rect x="345" y="239" width="1" height="26" fill="#33dc33"/><rect x="344" y="248" width="3" height="12" fill="#33dc33"/><rect x="345" y="249" width="1" height="10" fill="#c8ffc8"/><rect x="349" y="241" width="1" height="26" fill="#33dc33"/><rect x="348" y="248" width="3" height="13" fill="#33dc33"/><rect x="349" y="249" width="1" height="11" fill="#000"/><rect x="353" y="235" width="1" height="23" fill="#33dc33"/><rect x="352" y="246" width="3" height="10" fill="#33dc33"/><rect x="353" y="247" width="1" height="8" fill="#c8ffc8"/><rect x="357" y="241" width="1" height="21" fill="#33dc33"/><rect x="356" y="246" width="3" height="8" fill="#33dc33"/><rect x="357" y="247" width="1" height="6" fill="#000"/><rect x="361" y="238" width="1" height="21" fill="#33dc33"/><rect x="360" y="242" width="3" height="6" fill="#33dc33"/><rect x="361" y="243" width="1" height="4" fill="#000"/><rect x="365" y="235" width="1" height="23" fill="#33dc33"/><rect x="364" y="244" width="3" height="7" fill="#33dc33"/><rect x="365" y="245" width="1" height="5" fill="#c8ffc8"/><rect x="369" y="236" width="1" height="31" fill="#33dc33"/><rect x="368" y="241" width="3" height="7" fill="#33dc33"/><rect x="369" y="242" width="1" height="5" fill="#000"/><rect x="373" y="228" width="1" height="21" fill="#33dc33"/><rect x="372" y="237" width="3" height="3" fill="#33dc33"/><rect x="373" y="238" width="1" height="1" fill="#000"/><rect x="377" y="230" width="1" height="30" fill="#33dc33"/><rect x="376" y="239" width="3" height="12" fill="#33dc33"/><rect x="377" y="240" width="1" height="10" fill="#c8ffc8"/><rect x="381" y="230" width="1" height="28" fill="#33dc33"/><rect x="380" y="236" width="3" height="12" fill="#33dc33"/><rect x="381" y="237" width="1" height="10" fill="#000"/><rect x="385" y="226" width="1" height="20" fill="#33dc33"/><rect x="384" y="237" width="3" height="3" fill="#33dc33"/><rect x="385" y="238" width="1" height="1" fill="#000"/><rect x="389" y="218" width="1" height="26" fill="#33dc33"/><rect x="388" y="226" width="3" height="13" fill="#33dc33"/><rect x="389" y="227" width="1" height="11" fill="#000"/><rect x="393" y="208" width="1" height="28" fill="#33dc33"/><rect x="392" y="219" width="3" height="5" fill="#33dc33"/><rect x="393" y="220" width="1" height="3" fill="#000"/><rect x="397" y="208" width="1" height="23" fill="#33dc33"/><rect x="396" y="218" width="3" height="11" fill="#33dc33"/><rect x="397" y="219" width="1" height="9" fill="#c8ffc8"/><rect x="401" y="218" width="1" height="38" fill="#33dc33"/><rect x="400" y="230" width="3" height="19" fill="#33dc33"/><rect x="401" y="231" width="1" height="17" fill="#c8ffc8"/><rect x="405" y="239" width="1" height="26" fill="#33dc33"/><rect x="404" y="250" width="3" height="9" fill="#33dc33"/><rect x="405" y="251" width="1" height="7" fill="#c8ffc8"/><rect x="409" y="236" width="1" height="31" fill="#33dc33"/><rect x="408" y="246" width="3" height="10" fill="#33dc33"/><rect x="409" y="247" width="1" height="8" fill="#000"/><rect x="413" y="228" width="1" height="26" fill="#33dc33"/><rect x="412" y="236" width="3" height="6" fill="#33dc33"/><rect x="413" y="237" width="1" height="4" fill="#000"/><rect x="417" y="228" width="1" height="41" fill="#33dc33"/><rect x="416" y="238" width="3" height="26" fill="#33dc33"/><rect x="417" y="239" width="1" height="24" fill="#c8ffc8"/><rect x="421" y="250" width="1" height="28" fill="#33dc33"/><rect x="420" y="259" width="3" height="3" fill="#33dc33"/><rect x="421" y="260" width="1" height="1" fill="#000"/><rect x="425" y="238" width="1" height="29" fill="#33dc33"/><rect x="424" y="241" width="3" height="15" fill="#33dc33"/><rect x="425" y="242" width="1" height="13" fill="#000"/><rect x="429" y="233" width="1" height="39" fill="#33dc33"/><rect x="428" y="244" width="3" height="23" fill="#33dc33"/><rect x="429" y="245" width="1" height="21" fill="#c8ffc8"/><rect x="433" y="258" width="1" height="41" fill="#33dc33"/><rect x="432" y="268" width="3" height="18" fill="#33dc33"/><rect x="433" y="269" width="1" height="16" fill="#c8ffc8"/><rect x="437" y="279" width="1" height="147" fill="#33dc33"/><rect x="436" y="290" width="3" height="131" fill="#33dc33"/><rect x="437" y="291" width="1" height="129" fill="#c8ffc8"/><rect x="441" y="370" width="1" height="58" fill="#33dc33"/><rect x="440" y="412" width="3" height="14" fill="#33dc33"/><rect x="441" y="413" width="1" height="12" fill="#000"/><rect x="445" y="374" width="1" height="45" fill="#33dc33"/><rect x="444" y="401" width="3" height="7" fill="#33dc33"/><rect x="445" y="402" width="1" height="5" fill="#000"/><rect x="449" y="392" width="1" height="78" fill="#33dc33"/><rect x="448" y="399" width="3" height="49" fill="#33dc33"/><rect x="449" y="400" width="1" height="47" fill="#c8ffc8"/><rect x="453" y="412" width="1" height="52" fill="#33dc33"/><rect x="452" y="432" width="3" height="20" fill="#33dc33"/><rect x="453" y="433" width="1" height="18" fill="#000"/><rect x="457" y="364" width="1" height="75" fill="#33dc33"/><rect x="456" y="374" width="3" height="57" fill="#33dc33"/><rect x="457" y="375" width="1" height="55" fill="#000"/><rect x="461" y="281" width="1" height="98" fill="#33dc33"/><rect x="460" y="288" width="3" height="84" fill="#33dc33"/><rect x="461" y="289" width="1" height="82" fill="#000"/><rect x="465" y="237" width="1" height="76" fill="#33dc33"/><rect x="464" y="266" width="3" height="26" fill="#33dc33"/><rect x="465" y="267" width="1" height="24" fill="#000"/><rect x="469" y="250" width="1" height="52" fill="#33dc33"/><rect x="468" y="268" width="3" height="29" fill="#33dc33"/><rect x="469" y="269" width="1" height="27" fill="#c8ffc8"/><rect x="473" y="264" width="1" height="38" fill="#33dc33"/><rect x="472" y="286" width="3" height="6" fill="#33dc33"/><rect x="473" y="287" width="1" height="4" fill="#000"/><rect x="477" y="268" width="1" height="30" fill="#33dc33"/><rect x="476" y="286" width="3" height="3" fill="#33dc33"/><rect x="477" y="287" width="1" height="1" fill="#000"/><rect x="481" y="275" width="1" height="27" fill="#33dc33"/><rect x="480" y="281" width="3" height="5" fill="#33dc33"/><rect x="481" y="282" width="1" height="3" fill="#c8ffc8"/><rect x="485" y="279" width="1" height="37" fill="#33dc33"/><rect x="484" y="288" width="3" height="16" fill="#33dc33"/><rect x="485" y="289" width="1" height="14" fill="#c8ffc8"/><rect x="489" y="244" width="1" height="64" fill="#33dc33"/><rect x="488" y="286" width="3" height="15" fill="#33dc33"/><rect x="489" y="287" width="1" height="13" fill="#000"/><rect x="493" y="261" width="1" height="45" fill="#33dc33"/><rect x="492" y="279" width="3" height="20" fill="#33dc33"/><rect x="493" y="280" width="1" height="18" fill="#c8ffc8"/><rect x="497" y="281" width="1" height="43" fill="#33dc33"/><rect x="496" y="290" width="3" height="8" fill="#33dc33"/><rect x="497" y="291" width="1" height="6" fill="#000"/><rect x="501" y="275" width="1" height="33" fill="#33dc33"/><rect x="500" y="292" width="3" height="10" fill="#33dc33"/><rect x="501" y="293" width="1" height="8" fill="#c8ffc8"/><rect x="505" y="275" width="1" height="162" fill="#33dc33"/><rect x="504" y="299" width="3" height="95" fill="#33dc33"/><rect x="505" y="300" width="1" height="93" fill="#c8ffc8"/><rect x="509" y="348" width="1" height="69" fill="#33dc33"/><rect x="508" y="388" width="3" height="11" fill="#33dc33"/><rect x="509" y="389" width="1" height="9" fill="#000"/><rect x="513" y="361" width="1" height="67" fill="#33dc33"/><rect x="512" y="394" width="3" height="14" fill="#33dc33"/><rect x="513" y="395" width="1" height="12" fill="#c8ffc8"/><rect x="517" y="399" width="1" height="42" fill="#33dc33"/><rect x="516" y="406" width="3" height="26" fill="#33dc33"/><rect x="517" y="407" width="1" height="24" fill="#c8ffc8"/><rect x="521" y="394" width="1" height="51" fill="#33dc33"/><rect x="520" y="410" width="3" height="21" fill="#33dc33"/><rect x="521" y="411" width="1" height="19" fill="#000"/><rect x="525" y="376" width="1" height="41" fill="#33dc33"/><rect x="524" y="390" width="3" height="14" fill="#33dc33"/><rect x="525" y="391" width="1" height="12" fill="#000"/><rect x="529" y="383" width="1" height="36" fill="#33dc33"/><rect x="528" y="392" width="3" height="14" fill="#33dc33"/><rect x="529" y="393" width="1" height="12" fill="#c8ffc8"/><rect x="533" y="394" width="1" height="25" fill="#33dc33"/><rect x="532" y="410" width="3" height="4" fill="#33dc33"/><rect x="533" y="411" width="1" height="2" fill="#c8ffc8"/><rect x="537" y="385" width="1" height="41" fill="#33dc33"/><rect x="536" y="399" width="3" height="13" fill="#33dc33"/><rect x="537" y="400" width="1" height="11" fill="#000"/><rect x="541" y="376" width="1" height="32" fill="#33dc33"/><rect x="540" y="396" width="3" height="1" fill="#33dc33"/><rect x="545" y="383" width="1" height="27" fill="#33dc33"/><rect x="544" y="392" width="3" height="7" fill="#33dc33"/><rect x="545" y="393" width="1" height="5" fill="#000"/><rect x="549" y="359" width="1" height="41" fill="#33dc33"/><rect x="548" y="370" width="3" height="25" fill="#33dc33"/><rect x="549" y="371" width="1" height="23" fill="#000"/><rect x="553" y="340" width="1" height="53" fill="#33dc33"/><rect x="552" y="372" width="3" height="2" fill="#33dc33"/><rect x="557" y="341" width="1" height="36" fill="#33dc33"/><rect x="556" y="352" width="3" height="12" fill="#33dc33"/><rect x="557" y="353" width="1" height="10" fill="#000"/><rect x="561" y="334" width="1" height="40" fill="#33dc33"/><rect x="560" y="348" width="3" height="3" fill="#33dc33"/><rect x="561" y="349" width="1" height="1" fill="#000"/><rect x="565" y="341" width="1" height="36" fill="#33dc33"/><rect x="564" y="345" width="3" height="27" fill="#33dc33"/><rect x="565" y="346" width="1" height="25" fill="#c8ffc8"/><rect x="569" y="362" width="1" height="36" fill="#33dc33"/><rect x="568" y="374" width="3" height="6" fill="#33dc33"/><rect x="569" y="375" width="1" height="4" fill="#c8ffc8"/><rect x="573" y="370" width="1" height="52" fill="#33dc33"/><rect x="572" y="374" width="3" height="38" fill="#33dc33"/><rect x="573" y="375" width="1" height="36" fill="#c8ffc8"/><rect x="577" y="385" width="1" height="41" fill="#33dc33"/><rect x="576" y="399" width="3" height="16" fill="#33dc33"/><rect x="577" y="400" width="1" height="14" fill="#000"/><rect x="581" y="365" width="1" height="41" fill="#33dc33"/><rect x="580" y="394" width="3" height="10" fill="#33dc33"/><rect x="581" y="395" width="1" height="8" fill="#000"/><rect x="585" y="388" width="1" height="30" fill="#33dc33"/><rect x="584" y="396" width="3" height="6" fill="#33dc33"/><rect x="585" y="397" width="1" height="4" fill="#c8ffc8"/><rect x="589" y="392" width="1" height="85" fill="#33dc33"/><rect x="588" y="403" width="3" height="63" fill="#33dc33"/><rect x="589" y="404" width="1" height="61" fill="#c8ffc8"/><rect x="593" y="450" width="1" height="43" fill="#33dc33"/><rect x="592" y="469" width="3" height="17" fill="#33dc33"/><rect x="593" y="470" width="1" height="15" fill="#c8ffc8"/><rect x="597" y="480" width="1" height="55" fill="#33dc33"/><rect x="596" y="489" width="3" height="22" fill="#33dc33"/><rect x="597" y="490" width="1" height="20" fill="#c8ffc8"/><rect x="601" y="461" width="1" height="56" fill="#33dc33"/><rect x="600" y="498" width="3" height="11" fill="#33dc33"/><rect x="601" y="499" width="1" height="9" fill="#000"/><rect x="605" y="469" width="1" height="37" fill="#33dc33"/><rect x="604" y="485" width="3" height="16" fill="#33dc33"/><rect x="605" y="486" width="1" height="14" fill="#000"/><rect x="609" y="472" width="1" height="37" fill="#33dc33"/><rect x="608" y="492" width="3" height="9" fill="#33dc33"/><rect x="609" y="493" width="1" height="7" fill="#c8ffc8"/><rect x="613" y="494" width="1" height="36" fill="#33dc33"/><rect x="612" y="498" width="3" height="28" fill="#33dc33"/><rect x="613" y="499" width="1" height="26" fill="#c8ffc8"/><rect x="617" y="484" width="1" height="88" fill="#33dc33"/><rect x="616" y="523" width="3" height="13" fill="#33dc33"/><rect x="617" y="524" width="1" height="11" fill="#000"/><rect x="621" y="500" width="1" height="37" fill="#33dc33"/><rect x="620" y="525" width="3" height="1" fill="#33dc33"/><rect x="625" y="520" width="1" height="35" fill="#33dc33"/><rect x="624" y="529" width="3" height="9" fill="#33dc33"/><rect x="625" y="530" width="1" height="7" fill="#c8ffc8"/><rect x="629" y="492" width="1" height="56" fill="#33dc33"/><rect x="628" y="503" width="3" height="33" fill="#33dc33"/><rect x="629" y="504" width="1" height="31" fill="#000"/><rect x="633" y="496" width="1" height="36" fill="#33dc33"/><rect x="632" y="508" width="3" height="6" fill="#33dc33"/><rect x="633" y="509" width="1" height="4" fill="#c8ffc8"/><rect x="637" y="472" width="1" height="54" fill="#33dc33"/><rect x="636" y="485" width="3" height="22" fill="#33dc33"/><rect x="637" y="486" width="1" height="20" fill="#000"/><rect x="641" y="447" width="1" height="67" fill="#33dc33"/><rect x="640" y="485" width="3" height="5" fill="#33dc33"/><rect x="641" y="486" width="1" height="3" fill="#000"/><rect x="645" y="452" width="1" height="41" fill="#33dc33"/><rect x="644" y="467" width="3" height="14" fill="#33dc33"/><rect x="645" y="468" width="1" height="12" fill="#000"/><rect x="649" y="448" width="1" height="86" fill="#33dc33"/><rect x="648" y="461" width="3" height="34" fill="#33dc33"/><rect x="649" y="462" width="1" height="32" fill="#c8ffc8"/><rect x="653" y="461" width="1" height="71" fill="#33dc33"/><rect x="652" y="465" width="3" height="25" fill="#33dc33"/><rect x="653" y="466" width="1" height="23" fill="#000"/><rect x="657" y="454" width="1" height="63" fill="#33dc33"/><rect x="656" y="469" width="3" height="37" fill="#33dc33"/><rect x="657" y="470" width="1" height="35" fill="#c8ffc8"/><rect x="661" y="467" width="1" height="54" fill="#33dc33"/><rect x="660" y="483" width="3" height="17" fill="#33dc33"/><rect x="661" y="484" width="1" height="15" fill="#000"/><rect x="665" y="458" width="1" height="43" fill="#33dc33"/><rect x="664" y="480" width="3" height="16" fill="#33dc33"/><rect x="665" y="481" width="1" height="14" fill="#c8ffc8"/><rect x="669" y="407" width="1" height="117" fill="#33dc33"/><rect x="668" y="428" width="3" height="67" fill="#33dc33"/><rect x="669" y="429" width="1" height="65" fill="#000"/><rect x="673" y="419" width="1" height="47" fill="#33dc33"/><rect x="672" y="430" width="3" height="6" fill="#33dc33"/><rect x="673" y="431" width="1" height="4" fill="#c8ffc8"/><rect x="677" y="396" width="1" height="49" fill="#33dc33"/><rect x="676" y="414" width="3" height="25" fill="#33dc33"/><rect x="677" y="415" width="1" height="23" fill="#000"/><rect x="681" y="394" width="1" height="44" fill="#33dc33"/><rect x="680" y="416" width="3" height="8" fill="#33dc33"/><rect x="681" y="417" width="1" height="6" fill="#c8ffc8"/><rect x="685" y="411" width="1" height="35" fill="#33dc33"/><rect x="684" y="425" width="3" height="10" fill="#33dc33"/><rect x="685" y="426" width="1" height="8" fill="#c8ffc8"/><rect x="689" y="376" width="1" height="68" fill="#33dc33"/><rect x="688" y="396" width="3" height="36" fill="#33dc33"/><rect x="689" y="397" width="1" height="34" fill="#000"/><rect x="693" y="374" width="1" height="40" fill="#33dc33"/><rect x="692" y="388" width="3" height="11" fill="#33dc33"/><rect x="693" y="389" width="1" height="9" fill="#c8ffc8"/><rect x="697" y="362" width="1" height="44" fill="#33dc33"/><rect x="696" y="396" width="3" height="1" fill="#33dc33"/><rect x="701" y="390" width="1" height="36" fill="#33dc33"/><rect x="700" y="394" width="3" height="13" fill="#33dc33"/><rect x="701" y="395" width="1" height="11" fill="#c8ffc8"/><rect x="705" y="382" width="1" height="30" fill="#33dc33"/><rect x="704" y="403" width="3" height="5" fill="#33dc33"/><rect x="705" y="404" width="1" height="3" fill="#c8ffc8"/><rect x="709" y="370" width="1" height="44" fill="#33dc33"/><rect x="708" y="396" width="3" height="10" fill="#33dc33"/><rect x="709" y="397" width="1" height="8" fill="#000"/><rect x="713" y="382" width="1" height="32" fill="#33dc33"/><rect x="712" y="394" width="3" height="10" fill="#33dc33"/><rect x="713" y="395" width="1" height="8" fill="#c8ffc8"/><rect x="717" y="390" width="1" height="22" fill="#33dc33"/><rect x="716" y="403" width="3" height="3" fill="#33dc33"/><rect x="717" y="404" width="1" height="1" fill="#000"/><rect x="721" y="370" width="1" height="42" fill="#33dc33"/><rect x="720" y="376" width="3" height="32" fill="#33dc33"/><rect x="721" y="377" width="1" height="30" fill="#000"/><rect x="725" y="363" width="1" height="43" fill="#33dc33"/><rect x="724" y="385" width="3" height="6" fill="#33dc33"/><rect x="725" y="386" width="1" height="4" fill="#c8ffc8"/><rect x="729" y="361" width="1" height="32" fill="#33dc33"/><rect x="728" y="372" width="3" height="17" fill="#33dc33"/><rect x="729" y="373" width="1" height="15" fill="#000"/><rect x="733" y="319" width="1" height="70" fill="#33dc33"/><rect x="732" y="365" width="3" height="4" fill="#33dc33"/><rect x="733" y="366" width="1" height="2" fill="#000"/><rect x="737" y="338" width="1" height="42" fill="#33dc33"/><rect x="736" y="361" width="3" height="8" fill="#33dc33"/><rect x="737" y="362" width="1" height="6" fill="#c8ffc8"/><rect x="741" y="348" width="1" height="26" fill="#33dc33"/><rect x="740" y="354" width="3" height="17" fill="#33dc33"/><rect x="741" y="355" width="1" height="15" fill="#000"/><rect x="745" y="340" width="1" height="38" fill="#33dc33"/><rect x="744" y="350" width="3" height="8" fill="#33dc33"/><rect x="745" y="351" width="1" height="6" fill="#000"/><rect x="749" y="321" width="1" height="38" fill="#33dc33"/><rect x="748" y="330" width="3" height="24" fill="#33dc33"/><rect x="749" y="331" width="1" height="22" fill="#000"/><rect x="753" y="317" width="1" height="37" fill="#33dc33"/><rect x="752" y="326" width="3" height="5" fill="#33dc33"/><rect x="753" y="327" width="1" height="3" fill="#000"/><rect x="757" y="315" width="1" height="23" fill="#33dc33"/><rect x="756" y="328" width="3" height="1" fill="#33dc33"/><rect x="761" y="272" width="1" height="74" fill="#33dc33"/><rect x="760" y="286" width="3" height="45" fill="#33dc33"/><rect x="761" y="287" width="1" height="43" fill="#000"/><rect x="765" y="246" width="1" height="75" fill="#33dc33"/><rect x="764" y="250" width="3" height="41" fill="#33dc33"/><rect x="765" y="251" width="1" height="39" fill="#000"/><rect x="769" y="241" width="1" height="35" fill="#33dc33"/><rect x="768" y="257" width="3" height="5" fill="#33dc33"/><rect x="769" y="258" width="1" height="3" fill="#c8ffc8"/><rect x="773" y="253" width="1" height="36" fill="#33dc33"/><rect x="772" y="264" width="3" height="5" fill="#33dc33"/><rect x="773" y="265" width="1" height="3" fill="#c8ffc8"/><rect x="777" y="250" width="1" height="32" fill="#33dc33"/><rect x="776" y="270" width="3" height="3" fill="#33dc33"/><rect x="777" y="271" width="1" height="1" fill="#c8ffc8"/><rect x="781" y="261" width="1" height="63" fill="#33dc33"/><rect x="780" y="270" width="3" height="41" fill="#33dc33"/><rect x="781" y="271" width="1" height="39" fill="#c8ffc8"/><rect x="785" y="297" width="1" height="34" fill="#33dc33"/><rect x="784" y="308" width="3" height="11" fill="#33dc33"/><rect x="785" y="309" width="1" height="9" fill="#c8ffc8"/><rect x="789" y="297" width="1" height="27" fill="#33dc33"/><rect x="788" y="306" width="3" height="12" fill="#33dc33"/><rect x="789" y="307" width="1" height="10" fill="#000"/><rect x="793" y="268" width="1" height="32" fill="#33dc33"/><rect x="792" y="279" width="3" height="13" fill="#33dc33"/><rect x="793" y="280" width="1" height="11" fill="#000"/><rect x="797" y="255" width="1" height="26" fill="#33dc33"/><rect x="796" y="270" width="3" height="6" fill="#33dc33"/><rect x="797" y="271" width="1" height="4" fill="#000"/><rect x="801" y="266" width="1" height="26" fill="#33dc33"/><rect x="800" y="272" width="3" height="16" fill="#33dc33"/><rect x="801" y="273" width="1" height="14" fill="#c8ffc8"/><rect x="805" y="275" width="1" height="46" fill="#33dc33"/><rect x="804" y="286" width="3" height="5" fill="#33dc33"/><rect x="805" y="287" width="1" height="3" fill="#000"/><rect x="809" y="272" width="1" height="47" fill="#33dc33"/><rect x="808" y="281" width="3" height="20" fill="#33dc33"/><rect x="809" y="282" width="1" height="18" fill="#c8ffc8"/><rect x="813" y="290" width="1" height="18" fill="#33dc33"/><rect x="812" y="301" width="3" height="2" fill="#33dc33"/><rect x="817" y="277" width="1" height="29" fill="#33dc33"/><rect x="816" y="292" width="3" height="9" fill="#33dc33"/><rect x="817" y="293" width="1" height="7" fill="#000"/><rect x="821" y="266" width="1" height="38" fill="#33dc33"/><rect x="820" y="286" width="3" height="5" fill="#33dc33"/><rect x="821" y="287" width="1" height="3" fill="#000"/><rect x="825" y="259" width="1" height="43" fill="#33dc33"/><rect x="824" y="272" width="3" height="16" fill="#33dc33"/><rect x="825" y="273" width="1" height="14" fill="#000"/><rect x="829" y="259" width="1" height="29" fill="#33dc33"/><rect x="828" y="271" width="3" height="4" fill="#33dc33"/><rect x="829" y="272" width="1" height="2" fill="#000"/><rect x="833" y="259" width="1" height="29" fill="#33dc33"/><rect x="832" y="270" width="3" height="3" fill="#33dc33"/><rect x="833" y="271" width="1" height="1" fill="#000"/><rect x="837" y="255" width="1" height="57" fill="#33dc33"/><rect x="836" y="277" width="3" height="19" fill="#33dc33"/><rect x="837" y="278" width="1" height="17" fill="#c8ffc8"/><rect x="841" y="272" width="1" height="36" fill="#33dc33"/><rect x="840" y="290" width="3" height="8" fill="#33dc33"/><rect x="841" y="291" width="1" height="6" fill="#000"/><rect x="845" y="271" width="1" height="37" fill="#33dc33"/><rect x="844" y="284" width="3" height="14" fill="#33dc33"/><rect x="845" y="285" width="1" height="12" fill="#c8ffc8"/><rect x="849" y="287" width="1" height="39" fill="#33dc33"/><rect x="848" y="295" width="3" height="9" fill="#33dc33"/><rect x="849" y="296" width="1" height="7" fill="#c8ffc8"/><rect x="853" y="279" width="1" height="33" fill="#33dc33"/><rect x="852" y="295" width="3" height="12" fill="#33dc33"/><rect x="853" y="296" width="1" height="10" fill="#000"/><rect x="857" y="266" width="1" height="28" fill="#33dc33"/><rect x="856" y="277" width="3" height="14" fill="#33dc33"/><rect x="857" y="278" width="1" height="12" fill="#000"/><rect x="861" y="240" width="1" height="44" fill="#33dc33"/><rect x="860" y="270" width="3" height="5" fill="#33dc33"/><rect x="861" y="271" width="1" height="3" fill="#000"/><rect x="865" y="244" width="1" height="48" fill="#33dc33"/><rect x="864" y="264" width="3" height="8" fill="#33dc33"/><rect x="865" y="265" width="1" height="6" fill="#000"/><rect x="869" y="250" width="1" height="31" fill="#33dc33"/><rect x="868" y="259" width="3" height="9" fill="#33dc33"/><rect x="869" y="260" width="1" height="7" fill="#c8ffc8"/><rect x="873" y="262" width="1" height="33" fill="#33dc33"/><rect x="872" y="272" width="3" height="5" fill="#33dc33"/><rect x="873" y="273" width="1" height="3" fill="#c8ffc8"/><rect x="877" y="250" width="1" height="58" fill="#33dc33"/><rect x="876" y="279" width="3" height="16" fill="#33dc33"/><rect x="877" y="280" width="1" height="14" fill="#c8ffc8"/><rect x="881" y="284" width="1" height="34" fill="#33dc33"/><rect x="880" y="301" width="3" height="6" fill="#33dc33"/><rect x="881" y="302" width="1" height="4" fill="#c8ffc8"/><rect x="885" y="255" width="1" height="63" fill="#33dc33"/><rect x="884" y="259" width="3" height="49" fill="#33dc33"/><rect x="885" y="260" width="1" height="47" fill="#000"/><rect x="889" y="259" width="1" height="76" fill="#33dc33"/><rect x="888" y="271" width="3" height="52" fill="#33dc33"/><rect x="889" y="272" width="1" height="50" fill="#c8ffc8"/><rect x="893" y="271" width="1" height="62" fill="#33dc33"/><rect x="892" y="276" width="3" height="46" fill="#33dc33"/><rect x="893" y="277" width="1" height="44" fill="#000"/><rect x="897" y="266" width="1" height="26" fill="#33dc33"/><rect x="896" y="278" width="3" height="1" fill="#33dc33"/><rect x="901" y="261" width="1" height="23" fill="#33dc33"/><rect x="900" y="272" width="3" height="1" fill="#33dc33"/><rect x="905" y="256" width="1" height="26" fill="#33dc33"/><rect x="904" y="271" width="3" height="4" fill="#33dc33"/><rect x="905" y="272" width="1" height="2" fill="#000"/><rect x="909" y="261" width="1" height="18" fill="#33dc33"/><rect x="908" y="271" width="3" height="1" fill="#33dc33"/><rect x="913" y="253" width="1" height="28" fill="#33dc33"/><rect x="912" y="266" width="3" height="5" fill="#33dc33"/><rect x="913" y="267" width="1" height="3" fill="#000"/><rect x="917" y="246" width="1" height="32" fill="#33dc33"/><rect x="916" y="258" width="3" height="12" fill="#33dc33"/><rect x="917" y="259" width="1" height="10" fill="#000"/><rect x="921" y="246" width="1" height="40" fill="#33dc33"/><rect x="920" y="264" width="3" height="21" fill="#33dc33"/><rect x="921" y="265" width="1" height="19" fill="#000"/><rect x="925" y="228" width="1" height="43" fill="#33dc33"/><rect x="924" y="235" width="3" height="26" fill="#33dc33"/><rect x="925" y="236" width="1" height="24" fill="#000"/><rect x="929" y="218" width="1" height="26" fill="#33dc33"/><rect x="928" y="226" width="3" height="12" fill="#33dc33"/><rect x="929" y="227" width="1" height="10" fill="#000"/><rect x="933" y="199" width="1" height="32" fill="#33dc33"/><rect x="932" y="210" width="3" height="14" fill="#33dc33"/><rect x="933" y="211" width="1" height="12" fill="#000"/><rect x="937" y="202" width="1" height="29" fill="#33dc33"/><rect x="936" y="209" width="3" height="8" fill="#33dc33"/><rect x="937" y="210" width="1" height="6" fill="#c8ffc8"/><rect x="941" y="212" width="1" height="14" fill="#33dc33"/><rect x="940" y="216" width="3" height="3" fill="#33dc33"/><rect x="941" y="217" width="1" height="1" fill="#c8ffc8"/><rect x="945" y="213" width="1" height="25" fill="#33dc33"/><rect x="944" y="222" width="3" height="12" fill="#33dc33"/><rect x="945" y="223" width="1" height="10" fill="#c8ffc8"/><rect x="949" y="211" width="1" height="23" fill="#33dc33"/><rect x="948" y="216" width="3" height="15" fill="#33dc33"/><rect x="949" y="217" width="1" height="13" fill="#000"/><rect x="953" y="209" width="1" height="17" fill="#33dc33"/><rect x="952" y="217" width="3" height="1" fill="#33dc33"/><rect x="957" y="204" width="1" height="18" fill="#33dc33"/><rect x="956" y="213" width="3" height="3" fill="#33dc33"/><rect x="957" y="214" width="1" height="1" fill="#000"/><rect x="961" y="204" width="1" height="22" fill="#33dc33"/><rect x="960" y="210" width="3" height="8" fill="#33dc33"/><rect x="961" y="211" width="1" height="6" fill="#c8ffc8"/><rect x="965" y="209" width="1" height="25" fill="#33dc33"/><rect x="964" y="219" width="3" height="3" fill="#33dc33"/><rect x="965" y="220" width="1" height="1" fill="#c8ffc8"/><rect x="969" y="196" width="1" height="26" fill="#33dc33"/><rect x="968" y="206" width="3" height="8" fill="#33dc33"/><rect x="969" y="207" width="1" height="6" fill="#000"/><rect x="973" y="166" width="1" height="51" fill="#33dc33"/><rect x="972" y="171" width="3" height="37" fill="#33dc33"/><rect x="973" y="172" width="1" height="35" fill="#000"/><rect x="977" y="120" width="1" height="69" fill="#33dc33"/><rect x="976" y="171" width="3" height="4" fill="#33dc33"/><rect x="977" y="172" width="1" height="2" fill="#000"/><text x="205" y="220" fill="#fff" textLength="54.5" lengthAdjust="spacingAndGlyphs">#463540 buy</text><text x="205" y="284" fill="#fff" textLength="54.5" lengthAdjust="spacingAndGlyphs">#463107 buy</text><text x="205" y="408" fill="#fff" textLength="54.5" lengthAdjust="spacingAndGlyphs">#462945 buy</text><text x="205" y="419" fill="#fff" textLength="54.5" lengthAdjust="spacingAndGlyphs">#462220 buy</text><text x="205" y="496" fill="#fff" textLength="54.5" lengthAdjust="spacingAndGlyphs">#462573 buy</text><rect x="201" y="77" width="190" height="11" fill="#000"/><text x="203" y="86" fill="#fff" textLength="184" lengthAdjust="spacingAndGlyphs" xml:space="preserve">USDJPY,M30  121.96 122.20 121.89 121.97</text><path d="M867 295 L876 304 H870 V319 H863 V304 H858 Z" fill="#f21a1a" shape-rendering="auto"/><path d="M956 234 L965 243 H959 V258 H952 V243 H947 Z" fill="#f21a1a" shape-rendering="auto"/><rect x="986" y="165" width="33" height="12" fill="#fff"/><text x="987" y="175" fill="#000" textLength="27" lengthAdjust="spacingAndGlyphs">121.97</text></svg><svg class="a" style="left:2px;top:609px" width="10" height="10"><path d="M2.500 2.500L7.500 7.500M7.500 2.500L2.500 7.500" stroke="#000" stroke-width="1.700"/></svg><div class="a" style="left:1px;top:622px;width:13px;height:87px;background:#7189d8"></div><div class="t" style="left:1px;top:708px;width:26px;height:13px;font-size:12px;color:#cfe0f8;transform:rotate(-90deg);transform-origin:left top">终端</div><div class="a" style="left:16px;top:609px;width:1006px;height:86px;border:1px solid;border-color:#716f64 #fff #fff #716f64;background:#fff"></div><div class="a" style="left:0;top:603px;width:1024px;height:1px;background:#c8c5b5"></div><div class="a" style="left:17px;top:610px;width:1004px;height:16px;background:#ece9d8"></div><div class="a" style="left:18px;top:647px;width:984px;height:17px;background:#e8e8e8"></div><div class="a" style="left:18px;top:681px;width:984px;height:13px;background:#c0c0c0"></div><div class="a" style="left:18px;top:694px;width:1003px;height:1px;background:#000"></div><div class="a" style="left:18px;top:610px;width:89px;height:16px;border-right:1px solid #aca899;border-bottom:2px solid #c9c6b6;box-shadow:inset -1px 0 0 #fff"></div><div class="t" style="left:24px;top:613px;font-size:12px">定单号</div><div class="a" style="left:108px;top:610px;width:166px;height:16px;border-right:1px solid #aca899;border-bottom:2px solid #c9c6b6;box-shadow:inset -1px 0 0 #fff"></div><div class="t" style="left:108px;top:613px;width:161px;text-align:right;font-size:12px">时间</div><div class="a" style="left:107px;top:629px;width:1px;height:52px;background:#e0e0e0"></div><div class="a" style="left:275px;top:610px;width:75px;height:16px;border-right:1px solid #aca899;border-bottom:2px solid #c9c6b6;box-shadow:inset -1px 0 0 #fff"></div><div class="t" style="left:275px;top:613px;width:70px;text-align:right;font-size:12px">类型</div><div class="a" style="left:274px;top:629px;width:1px;height:52px;background:#e0e0e0"></div><div class="a" style="left:351px;top:610px;width:45px;height:16px;border-right:1px solid #aca899;border-bottom:2px solid #c9c6b6;box-shadow:inset -1px 0 0 #fff"></div><div class="t" style="left:351px;top:613px;width:40px;text-align:right;font-size:12px">手数</div><div class="a" style="left:350px;top:629px;width:1px;height:52px;background:#e0e0e0"></div><div class="a" style="left:397px;top:610px;width:66px;height:16px;border-right:1px solid #aca899;border-bottom:2px solid #c9c6b6;box-shadow:inset -1px 0 0 #fff"></div><div class="t" style="left:397px;top:613px;width:61px;text-align:right;font-size:12px">商品</div><div class="a" style="left:396px;top:629px;width:1px;height:52px;background:#e0e0e0"></div><div class="a" style="left:464px;top:610px;width:75px;height:16px;border-right:1px solid #aca899;border-bottom:2px solid #c9c6b6;box-shadow:inset -1px 0 0 #fff"></div><div class="t" style="left:464px;top:613px;width:70px;text-align:right;font-size:12px">价位</div><div class="a" style="left:463px;top:629px;width:1px;height:52px;background:#e0e0e0"></div><div class="a" style="left:540px;top:610px;width:75px;height:16px;border-right:1px solid #aca899;border-bottom:2px solid #c9c6b6;box-shadow:inset -1px 0 0 #fff"></div><div class="t" style="left:540px;top:613px;width:70px;text-align:right;font-size:12px">止损</div><div class="a" style="left:539px;top:629px;width:1px;height:52px;background:#e0e0e0"></div><div class="a" style="left:616px;top:610px;width:75px;height:16px;border-right:1px solid #aca899;border-bottom:2px solid #c9c6b6;box-shadow:inset -1px 0 0 #fff"></div><div class="t" style="left:616px;top:613px;width:70px;text-align:right;font-size:12px">获利</div><div class="a" style="left:615px;top:629px;width:1px;height:52px;background:#e0e0e0"></div><div class="a" style="left:692px;top:610px;width:75px;height:16px;border-right:1px solid #aca899;border-bottom:2px solid #c9c6b6;box-shadow:inset -1px 0 0 #fff"></div><div class="t" style="left:692px;top:613px;width:70px;text-align:right;font-size:12px">价位</div><div class="a" style="left:691px;top:629px;width:1px;height:52px;background:#e0e0e0"></div><div class="a" style="left:768px;top:610px;width:75px;height:16px;border-right:1px solid #aca899;border-bottom:2px solid #c9c6b6;box-shadow:inset -1px 0 0 #fff"></div><div class="t" style="left:768px;top:613px;width:70px;text-align:right;font-size:12px">佣金</div><div class="a" style="left:767px;top:629px;width:1px;height:52px;background:#e0e0e0"></div><div class="a" style="left:844px;top:610px;width:75px;height:16px;border-right:1px solid #aca899;border-bottom:2px solid #c9c6b6;box-shadow:inset -1px 0 0 #fff"></div><div class="t" style="left:844px;top:613px;width:70px;text-align:right;font-size:12px">利息</div><div class="a" style="left:843px;top:629px;width:1px;height:52px;background:#e0e0e0"></div><div class="a" style="left:920px;top:610px;width:81px;height:16px;border-right:1px solid #aca899;border-bottom:2px solid #c9c6b6;box-shadow:inset -1px 0 0 #fff"></div><div class="t" style="left:920px;top:613px;width:76px;text-align:right;font-size:12px">盈亏</div><div class="a" style="left:919px;top:629px;width:1px;height:52px;background:#e0e0e0"></div><svg class="a" style="left:21px;top:631px" width="11" height="13"><rect x=".5" y=".5" width="10" height="12" fill="#fff" stroke="#223"/><path d="M3 3.500H6M3 5.500H7M3 7.500H6M3 9.500H8" stroke="#2030c0"/></svg><div class="t" style="left:38px;top:633px;font-size:11px">463107</div><div class="t" style="left:108px;top:633px;width:163px;text-align:right;font-size:11px">2007.01.26 07:19</div><div class="t" style="left:275px;top:633px;width:72px;text-align:right;font-size:11px">buy</div><div class="t" style="left:351px;top:633px;width:42px;text-align:right;font-size:11px">1.00</div><div class="t" style="left:397px;top:633px;width:63px;text-align:right;font-size:11px">usdjpy</div><div class="t" style="left:464px;top:633px;width:72px;text-align:right;font-size:11px">121.45</div><div class="t" style="left:540px;top:633px;width:72px;text-align:right;font-size:11px">0.00</div><div class="t" style="left:616px;top:633px;width:72px;text-align:right;font-size:11px">0.00</div><div class="t" style="left:692px;top:633px;width:72px;text-align:right;font-size:11px">121.96</div><div class="t" style="left:768px;top:633px;width:72px;text-align:right;font-size:11px">0.00</div><div class="t" style="left:844px;top:633px;width:72px;text-align:right;font-size:11px">2.00</div><div class="t" style="left:920px;top:633px;width:78px;text-align:right;font-size:11px">418.17</div><svg class="a" style="left:21px;top:648px" width="11" height="13"><rect x=".5" y=".5" width="10" height="12" fill="#fff" stroke="#223"/><path d="M3 3.500H6M3 5.500H7M3 7.500H6M3 9.500H8" stroke="#2030c0"/></svg><div class="t" style="left:38px;top:650px;font-size:11px">463535</div><div class="t" style="left:108px;top:650px;width:163px;text-align:right;font-size:11px">2007.01.29 05:18</div><div class="t" style="left:275px;top:650px;width:72px;text-align:right;font-size:11px">sell</div><div class="t" style="left:351px;top:650px;width:42px;text-align:right;font-size:11px">1.00</div><div class="t" style="left:397px;top:650px;width:63px;text-align:right;font-size:11px">gbpusd</div><div class="t" style="left:464px;top:650px;width:72px;text-align:right;font-size:11px">1.9576</div><div class="t" style="left:540px;top:650px;width:72px;text-align:right;font-size:11px">0.0000</div><div class="t" style="left:616px;top:650px;width:72px;text-align:right;font-size:11px">0.0000</div><div class="t" style="left:692px;top:650px;width:72px;text-align:right;font-size:11px">1.9571</div><div class="t" style="left:768px;top:650px;width:72px;text-align:right;font-size:11px">0.00</div><div class="t" style="left:844px;top:650px;width:72px;text-align:right;font-size:11px">0.00</div><div class="t" style="left:920px;top:650px;width:78px;text-align:right;font-size:11px">50.00</div><svg class="a" style="left:21px;top:665px" width="11" height="13"><rect x=".5" y=".5" width="10" height="12" fill="#fff" stroke="#223"/><path d="M3 3.500H6M3 5.500H7M3 7.500H6M3 9.500H8" stroke="#2030c0"/></svg><div class="t" style="left:38px;top:667px;font-size:11px">463540</div><div class="t" style="left:108px;top:667px;width:163px;text-align:right;font-size:11px">2007.01.29 07:21</div><div class="t" style="left:275px;top:667px;width:72px;text-align:right;font-size:11px">buy</div><div class="t" style="left:351px;top:667px;width:42px;text-align:right;font-size:11px">1.00</div><div class="t" style="left:397px;top:667px;width:63px;text-align:right;font-size:11px">usdjpy</div><div class="t" style="left:464px;top:667px;width:72px;text-align:right;font-size:11px">121.78</div><div class="t" style="left:540px;top:667px;width:72px;text-align:right;font-size:11px">0.00</div><div class="t" style="left:616px;top:667px;width:72px;text-align:right;font-size:11px">0.00</div><div class="t" style="left:692px;top:667px;width:72px;text-align:right;font-size:11px">121.96</div><div class="t" style="left:768px;top:667px;width:72px;text-align:right;font-size:11px">0.00</div><div class="t" style="left:844px;top:667px;width:72px;text-align:right;font-size:11px">0.00</div><div class="t" style="left:920px;top:667px;width:78px;text-align:right;font-size:11px">180.39</div><svg class="a" style="left:21px;top:684px" width="12" height="10"><path d="M5.500 0L11 6H8V9H3V6H0Z" fill="#1010f0"/></svg><div class="t" style="left:37px;top:683px;font-size:11px">Balance: 5504.71&nbsp; Credit: 0&nbsp; Equity: 10083.79&nbsp; Margin: 3000.00</div><div class="t" style="left:920px;top:683px;width:78px;text-align:right;font-size:11px">4579.08</div><div class="a" style="left:1003px;top:610px;width:17px;height:85px;background:linear-gradient(90deg,#f3f1ec,#fefefb)"></div><div class="a" style="left:1003px;top:610px;width:17px;height:16px;border:1px solid #fff;border-radius:2px;background:linear-gradient(90deg,#c8d6fb,#b9cbf7);box-shadow:inset 0 0 0 1px #b4c8f6"><svg width="17" height="16" style="position:absolute;left:-1px;top:-1px"><path d="M4 10 L8 6 L12 10" fill="none" stroke="#4d6185" stroke-width="2"/></svg></div><div class="a" style="left:1003px;top:679px;width:17px;height:16px;border:1px solid #fff;border-radius:2px;background:linear-gradient(90deg,#c8d6fb,#b9cbf7);box-shadow:inset 0 0 0 1px #b4c8f6"><svg width="17" height="16" style="position:absolute;left:-1px;top:-1px"><path d="M4 6 L8 10 L12 6" fill="none" stroke="#4d6185" stroke-width="2"/></svg></div><div class="a" style="left:1003px;top:655px;width:17px;height:15px;border:1px solid #fff;border-radius:2px;background:linear-gradient(90deg,#c8d6fb,#b9cbf7);box-shadow:inset 0 0 0 1px #b4c8f6"></div><div class="a" style="left:1008px;top:659px;width:6px;height:1px;background:#8ca0d8"></div><div class="a" style="left:1008px;top:661px;width:6px;height:1px;background:#8ca0d8"></div><div class="a" style="left:1008px;top:663px;width:6px;height:1px;background:#8ca0d8"></div><div class="a" style="left:1008px;top:665px;width:6px;height:1px;background:#8ca0d8"></div><svg class="a" style="left:14px;top:695px" width="240" height="14"><path d="M0 12.500H240" stroke="#000"/><path d="M4 0L9.600 12.500H38L42 0Z" fill="#fff" stroke="#000" stroke-width="1"/><path d="M4.500 0H41.500" stroke="#fff" stroke-width="1.500"/><path d="M66.0 1.500L71.0 12.500" fill="none" stroke="#000" stroke-width="1"/><path d="M115.0 1.500L121.0 12.500" fill="none" stroke="#000" stroke-width="1"/><path d="M146.6 1.500L152.0 12.500" fill="none" stroke="#000" stroke-width="1"/><path d="M177.0 1.500L182.0 12.500" fill="none" stroke="#000" stroke-width="1"/><path d="M207.0 1.500L212.0 12.500" fill="none" stroke="#000" stroke-width="1"/></svg><div class="t" style="left:29px;top:697px;font-size:9.5px;font-weight:bold;letter-spacing:-0.7px">交易</div><div class="t" style="left:59px;top:697px;font-size:9.5px;font-weight:bold;letter-spacing:-0.7px">新闻</div><div class="t" style="left:90px;top:697px;font-size:9.5px;font-weight:bold;letter-spacing:-0.7px">帐户历史</div><div class="t" style="left:139px;top:697px;font-size:9.5px;font-weight:bold;letter-spacing:-0.7px">警报</div><div class="t" style="left:170px;top:697px;font-size:9.5px;font-weight:bold;letter-spacing:-0.7px">邮箱</div><div class="t" style="left:202px;top:697px;font-size:9.5px;font-weight:bold;letter-spacing:-0.7px">日志</div><div class="a" style="left:0;top:714px;width:1024px;height:1px;background:#fff"></div><div class="a" style="left:423px;top:717px;width:73px;height:16px;background:#d4d0c8;border:1px solid;border-color:#77756a #fff #fff #77756a"></div><div class="t" style="left:427px;top:719px;font-size:12px;letter-spacing:-0.35px">Default</div><div class="a" style="left:500px;top:717px;width:97px;height:16px;background:#d4d0c8;border:1px solid;border-color:#77756a #fff #fff #77756a"></div><div class="t" style="left:504px;top:719px;font-size:12px;letter-spacing:-0.35px">2007.01.26 04:30</div><div class="a" style="left:600px;top:717px;width:69px;height:16px;background:#d4d0c8;border:1px solid;border-color:#77756a #fff #fff #77756a"></div><div class="t" style="left:604px;top:719px;font-size:12px;letter-spacing:-0.35px">O: 121.4300</div><div class="a" style="left:672px;top:717px;width:68px;height:16px;background:#d4d0c8;border:1px solid;border-color:#77756a #fff #fff #77756a"></div><div class="t" style="left:676px;top:719px;font-size:12px;letter-spacing:-0.35px">H: 121.5000</div><div class="a" style="left:744px;top:717px;width:65px;height:16px;background:#d4d0c8;border:1px solid;border-color:#77756a #fff #fff #77756a"></div><div class="t" style="left:748px;top:719px;font-size:12px;letter-spacing:-0.35px">L: 121.2900</div><div class="a" style="left:812px;top:717px;width:69px;height:16px;background:#d4d0c8;border:1px solid;border-color:#77756a #fff #fff #77756a"></div><div class="t" style="left:816px;top:719px;font-size:12px;letter-spacing:-0.35px">C: 121.4500</div><div class="a" style="left:884px;top:717px;width:62px;height:16px;background:#d4d0c8;border:1px solid;border-color:#77756a #fff #fff #77756a"></div><div class="t" style="left:888px;top:719px;font-size:12px;letter-spacing:-0.35px">V: 510</div><div class="a" style="left:949px;top:717px;width:75px;height:16px;background:#3fe63f;border:1px solid;border-color:#77756a #fff #fff #77756a"></div><div class="t" style="left:953px;top:719px;font-size:12px;letter-spacing:-0.35px">176/0 kb</div><div class="a" style="left:0;top:733px;width:1024px;height:5px;background:linear-gradient(#3f84ea,#2a66dc)"></div><div class="a" style="left:216px;top:666px;width:540px;height:48px;border:1px solid #b9c9ee;background:linear-gradient(#f2f6ff,#fff 30%,#fff 50%,#fdfeff 70%,#e6eefc);"></div><div class="a" style="left:217px;top:689px;width:538px;height:1px;background:#bccaf0"></div><div class="a" style="left:217px;top:667px;width:538px;height:22px;background:linear-gradient(#fdfeff,#eef4fe)"></div><div class="a" style="left:283px;top:668px;width:1px;height:21px;background:#bccaf0"></div><div class="a" style="left:433px;top:668px;width:1px;height:21px;background:#bccaf0"></div><div class="a" style="left:606px;top:668px;width:1px;height:21px;background:#bccaf0"></div><div class="a" style="left:693px;top:668px;width:1px;height:21px;background:#bccaf0"></div><div class="t" style="left:224px;top:672px;font-size:12px;color:#1e6dd0">万能五笔</div><div class="t" style="left:439px;top:672px;font-size:12px;letter-spacing:0.9px;color:#1e6dd0">输(五笔.拼音.英语):无需切换</div><div class="t" style="left:626px;top:672px;font-size:12px;color:#1e6dd0">万能搜索</div><div class="t" style="left:697px;top:672px;font-size:12px;color:#1e6dd0">网</div><svg class="a" style="left:718px;top:673px" width="9" height="11"><path d="M1 1H5.500L8 3.500V10H1Z M5.500 1V3.500H8" fill="none" stroke="#1e6dd0" stroke-width="1.300"/></svg><div class="t" style="left:735px;top:672px;font-size:12px;color:#1e6dd0">词</div><div class="t" style="left:689px;top:696px;font-size:12px;color:#1e6dd0">旅游</div><div class="a" style="left:4px;top:709px;width:126px;height:24px;background:#d8d4c8;border:1px solid;border-color:#fff #555 #555 #fff;box-shadow:1px 1px 0 #222"></div><div class="a" style="left:7px;top:711px;width:20px;height:20px;background:#c8c8c8;border:1px solid;border-color:#fff #555 #555 #fff;overflow:hidden"><div class="t" style="left:0px;top:1px;font:bold 12px 'Liberation Sans',sans-serif;color:#e8d020;text-shadow:0 0 1px #000">A</div><div class="t" style="left:8px;top:-1px;font:bold 12px 'Liberation Sans',sans-serif;color:#d02020">C</div><div class="t" style="left:1px;top:7px;font:bold 10px 'Liberation Sans',sans-serif;color:#2030d0">A</div><div class="t" style="left:9px;top:6px;font:bold 11px 'Liberation Sans',sans-serif;color:#e03030">C</div></div><div class="a" style="left:27px;top:711px;width:39px;height:20px;background:#c8c8c8;border:1px solid;border-color:#fff #555 #555 #fff;overflow:hidden"><div class="t" style="left:2px;top:0px;font-size:17px;color:#222">标准</div></div><div class="a" style="left:67px;top:711px;width:20px;height:20px;background:#c8c8c8;border:1px solid;border-color:#fff #555 #555 #fff;overflow:hidden"><svg width="18" height="17"><circle cx="9" cy="9" r="6" fill="#111"/><circle cx="6.500" cy="6.500" r="5.200" fill="#c8c8c8"/></svg></div><div class="a" style="left:87px;top:711px;width:20px;height:20px;background:#c8c8c8;border:1px solid;border-color:#fff #555 #555 #fff;overflow:hidden"><svg width="18" height="17"><rect x="4.500" y="7.500" width="3" height="3" fill="#fff" stroke="#111"/><path d="M11 7H13.500V10L12 12.500H11L12 10H11Z" fill="#111"/></svg></div><div class="a" style="left:107px;top:711px;width:20px;height:20px;background:#c8c8c8;border:1px solid;border-color:#fff #555 #555 #fff;overflow:hidden"><svg width="18" height="17"><rect x="1.500" y="3.500" width="15" height="11" fill="#b8b8b8" stroke="#999"/><path d="M3 6H15M3 9H15" stroke="#fff" stroke-width="2" stroke-dasharray="2.500 1"/><path d="M4 12H14" stroke="#fff" stroke-width="2"/></svg></div></body></html>
